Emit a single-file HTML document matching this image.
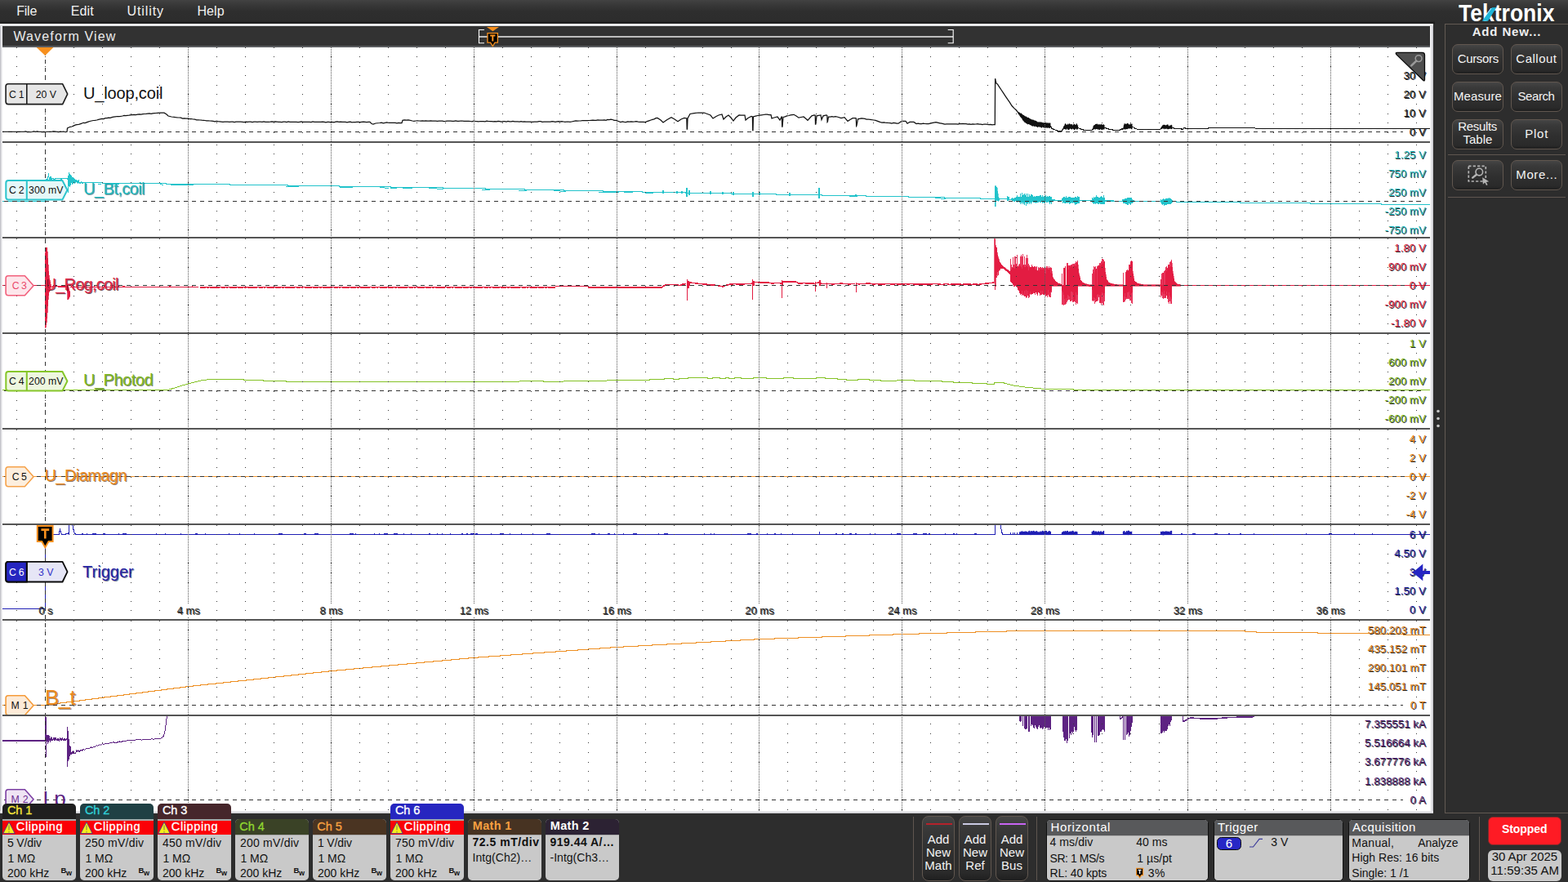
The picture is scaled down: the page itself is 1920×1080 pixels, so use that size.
<!DOCTYPE html><html lang="en"><head><meta charset="utf-8"><title>Tektronix Waveform View</title><style>
html,body{margin:0;padding:0}
body{width:1920px;height:1080px;overflow:hidden;position:relative;background:#2d2d2d;font-family:"Liberation Sans",sans-serif;}
.t{position:absolute;white-space:nowrap;line-height:normal;}
.abs{position:absolute}
#menubar{position:absolute;left:0;top:0;width:1920px;height:29px;background:linear-gradient(#424242 0,#383838 6px,#2e2e2e 14px,#2c2c2c 29px);}
#menubar:after{content:"";position:absolute;left:0;top:25px;width:1757px;height:4px;background:linear-gradient(#2c2c2c,#202020 70%,#151515)}
#wvframe{position:absolute;left:0;top:29px;width:1755px;height:967px;background:linear-gradient(90deg,#b8b8be 0,#e9e9ec 2px,#f4f4f6 3px,#f4f4f6 1752px,#e0e0e4 1753px,#c4c4ca 1755px);}
#wvframe:before{content:"";position:absolute;left:0;top:0;width:1755px;height:3px;background:linear-gradient(#ffffff,#dcdde0)}
#wvframe:after{content:"";position:absolute;left:0;bottom:0;width:1755px;height:3px;background:linear-gradient(#f2f2f4,#c9c9ce)}
#wvhead{position:absolute;left:3px;top:32px;width:1748px;height:26px;background:#323232;border-bottom:2px solid #5a5c5f;box-sizing:border-box}
#wv{position:absolute;left:3px;top:58px;}
.btn{position:absolute;box-sizing:border-box;border:1px solid #61574f;border-radius:7px;background:linear-gradient(#454545 0,#393939 18%,#2f2f2f 55%,#2a2a2a 88%,#1f1f1f 100%);}
.sepv{position:absolute;width:1px;background:#5f5650}
.seph{position:absolute;height:1px;background:#5f5650}
.badge{position:absolute;width:90px;border-radius:5px;overflow:hidden;background:#c9c9c9;}
.badge .hd{position:absolute;left:0;top:0;width:100%;height:19px;}
.badge .clip{position:absolute;left:0;width:100%;top:21px;height:17px;background:#fb0007}
.info{position:absolute;box-sizing:border-box;border:1.5px solid #101010;border-radius:5px;background:#c9c9c9;overflow:hidden}
.info .hd{position:absolute;left:0;top:0;width:100%;height:18.5px;background:#58595b;border-bottom:1px solid #b0b0b0}
</style></head><body>
<div id="menubar">
<span class="t" style="left:20.30px;top:5.00px;font-size:16px;color:#f2f2f2;letter-spacing:-0.267px;">File</span>
<span class="t" style="left:86.70px;top:5.00px;font-size:16px;color:#f2f2f2;letter-spacing:0.180px;">Edit</span>
<span class="t" style="left:155.50px;top:5.00px;font-size:16px;color:#f2f2f2;letter-spacing:0.897px;">Utility</span>
<span class="t" style="left:241.40px;top:5.00px;font-size:16px;color:#f2f2f2;letter-spacing:0.127px;">Help</span>
</div>
<span class="t" style="left:1785.90px;top:-1.30px;font-size:29.5px;color:#fff;transform:scaleX(0.8989);transform-origin:0 0;font-weight:700;">Tektronix</span>
<svg class="abs" style="left:1810px;top:4px" width="30" height="24" viewBox="1810 4 30 24"><polygon points="1814.8,25.8 1822,25.8 1832.4,9.2 1827,9.2" fill="#1fb5d8"/></svg>
<div id="wvframe"></div><div id="wvhead"></div>
<span class="t" style="left:16.40px;top:35.70px;font-size:16px;color:#ececec;letter-spacing:1.150px;">Waveform View</span>
<svg class="abs" style="left:580px;top:30px" width="600" height="30" viewBox="580 30 600 30">
<line x1="587" y1="45" x2="1167" y2="45" stroke="#bdbdbd" stroke-width="2"/>
<path d="M593 36.5H586.5V52.7H593" fill="none" stroke="#fff" stroke-width="1.1"/>
<path d="M1160.7 36.5H1167.2V52.7H1160.7" fill="none" stroke="#fff" stroke-width="1.1"/>
<polygon points="595.9,33 611,33 603.4,38.2" fill="#f7901e"/>
<path d="M597 40.6H609.4V52.2H606L603.3 56.6L600.6 52.2H597Z" fill="#000" stroke="#f7901e" stroke-width="1.3"/>
<path d="M600.2 43.6H606.4M603.3 43.6V50.6" stroke="#f7901e" stroke-width="2" fill="none"/>
</svg>
<svg id="wv" width="1748" height="935" viewBox="3 58 1748 935" shape-rendering="crispEdges">
<rect x="3" y="58" width="1748" height="935" fill="#fff"/>
<defs><clipPath id="cs0"><rect x="3" y="58" width="1748" height="115"/></clipPath><clipPath id="cs1"><rect x="3" y="175" width="1748" height="115"/></clipPath><clipPath id="cs2"><rect x="3" y="292" width="1748" height="115"/></clipPath><clipPath id="cs3"><rect x="3" y="409" width="1748" height="115"/></clipPath><clipPath id="cs4"><rect x="3" y="526" width="1748" height="115"/></clipPath><clipPath id="cs5"><rect x="3" y="643" width="1748" height="115"/></clipPath><clipPath id="cs6"><rect x="3" y="760" width="1748" height="115"/></clipPath><clipPath id="cs7"><rect x="3" y="877" width="1748" height="116"/></clipPath></defs>
<g clip-path="url(#cs0)"><polyline points="3.0,161.3 5.0,161.3 7.1,161.3 9.1,161.3 11.1,161.3 13.1,161.3 15.2,161.3 17.2,161.3 19.2,161.3 21.2,161.3 23.3,161.3 25.3,161.3 27.3,161.3 29.3,161.3 31.4,161.0 33.4,161.7 35.4,161.3 37.4,161.6 39.5,161.4 41.5,160.9 43.5,161.3 45.5,161.0 47.6,161.3 49.6,161.3 51.6,161.7 53.6,161.5 55.7,161.7 57.7,161.3 59.7,161.3 61.7,161.3 63.8,161.2 65.8,161.0 67.8,161.1 69.8,161.3 71.9,161.5 73.9,161.1 75.9,161.3 77.9,161.1 80.0,161.5 82.0,161.3 82.5,157.0 86.0,155.3 88.0,155.0 90.0,154.1 92.0,153.2 94.0,152.7 96.0,152.5 98.0,151.8 100.0,151.2 102.0,150.3 104.0,150.5 106.0,149.8 108.0,149.1 110.0,148.5 112.0,148.0 114.2,147.5 116.3,147.4 118.5,147.0 120.7,146.3 122.8,145.9 125.0,145.5 127.0,145.6 129.0,144.7 131.0,144.6 133.0,144.2 135.0,144.3 137.0,143.6 139.2,143.2 141.3,142.8 143.5,142.5 145.7,142.5 147.8,142.3 150.0,142.0 152.0,141.4 154.0,141.6 156.0,141.3 158.0,141.2 160.0,140.9 162.0,140.7 164.2,140.5 166.3,140.7 168.5,140.2 170.7,140.0 172.8,140.1 175.0,139.7 177.0,139.5 179.0,139.4 181.0,139.2 183.0,139.0 185.0,139.3 187.0,138.8 189.0,138.6 191.0,138.5 193.0,138.3 195.0,138.2 197.0,138.2 199.0,138.2 201.0,138.2 204.0,140.0 206.0,142.0 210.0,143.0 215.0,143.7 217.1,143.9 219.2,144.0 221.4,144.1 223.5,145.0 225.6,144.8 227.8,145.1 229.9,145.1 232.0,145.5 234.2,145.5 236.3,146.0 238.5,146.2 240.7,146.8 242.8,146.8 245.0,147.0 247.0,147.2 249.0,147.3 251.0,147.5 253.0,147.9 255.0,147.8 257.0,148.0 259.0,148.1 261.0,148.3 263.0,148.8 265.0,148.5 267.0,148.7 269.0,148.8 271.0,149.1 273.0,149.4 275.0,149.2 277.0,149.2 279.0,149.2 281.0,149.3 283.0,149.2 285.0,149.2 287.0,149.5 289.0,149.2 291.0,149.2 293.0,149.2 295.0,149.2 297.0,149.3 299.0,149.5 301.0,149.2 303.0,149.4 305.0,149.2 307.0,149.2 309.0,149.5 311.0,149.2 313.0,149.2 315.0,149.4 317.0,149.2 319.0,149.2 321.0,149.3 323.0,148.9 325.0,149.4 327.0,149.4 329.0,149.3 331.0,149.2 333.0,148.9 335.0,149.1 337.0,149.0 339.0,149.2 341.0,149.4 343.0,149.3 345.0,149.6 347.0,149.2 349.0,149.2 351.0,149.6 353.0,148.9 355.0,149.3 357.0,149.3 359.0,149.4 361.0,149.3 363.0,149.3 365.0,149.6 367.0,149.3 369.0,149.0 371.0,149.3 373.0,149.3 375.0,149.3 377.0,149.3 379.0,149.3 381.0,149.7 383.0,149.0 385.0,149.3 387.0,149.3 389.0,149.4 391.0,149.3 393.0,149.3 395.0,149.1 397.0,149.3 399.0,149.8 401.0,149.3 403.0,149.3 405.0,149.8 407.0,149.3 409.0,149.8 411.0,149.2 413.0,149.0 415.0,149.4 417.0,149.2 419.0,149.4 421.0,149.4 423.0,149.4 425.0,149.8 427.0,149.4 429.0,149.2 431.0,149.8 433.0,149.5 435.0,149.5 437.0,149.4 439.0,149.4 441.0,149.6 443.0,149.4 445.0,149.2 447.0,149.4 449.0,149.6 451.0,149.4 453.0,149.4 455.0,151.5 457.0,152.0 460.0,151.0 465.0,150.5 467.1,150.2 469.3,150.8 471.4,150.4 473.6,149.9 475.7,150.4 477.9,150.4 480.0,150.3 482.0,150.3 484.0,150.4 486.0,150.8 488.0,150.3 490.0,150.5 492.0,150.5 493.0,147.3 495.3,147.0 497.7,147.1 500.0,147.0 505.0,148.0 507.0,148.3 509.1,148.0 511.1,147.8 513.1,148.0 515.2,148.1 517.2,148.0 519.3,148.1 521.3,147.8 523.3,148.1 525.4,148.1 527.4,147.9 529.4,148.1 531.5,148.1 533.5,148.2 535.6,148.4 537.6,148.2 539.6,148.2 541.7,148.2 543.7,148.5 545.7,148.4 547.8,148.2 549.8,148.2 551.9,148.1 553.9,148.3 555.9,148.4 558.0,148.0 560.0,148.3 562.0,148.3 564.0,148.0 566.0,148.0 568.0,148.4 570.0,148.4 572.0,148.4 574.0,148.3 576.0,148.5 578.0,148.8 580.0,148.1 582.0,148.5 584.0,148.6 586.0,148.9 588.0,148.5 590.0,148.5 592.0,148.6 594.0,148.8 596.0,148.2 598.0,148.5 600.0,148.6 602.0,148.6 604.0,148.8 606.0,148.6 608.0,148.8 610.0,148.3 612.0,148.7 614.0,149.1 616.0,148.6 618.0,148.7 620.0,149.0 622.0,148.5 624.0,148.8 626.0,148.8 628.0,148.5 630.0,148.8 632.0,148.9 634.0,148.9 636.0,149.0 638.0,148.7 640.0,149.0 642.0,148.8 644.0,149.2 646.0,149.0 648.0,149.0 650.0,149.0 652.0,149.3 654.0,149.1 656.0,149.0 658.0,149.0 660.0,148.6 662.0,148.7 664.0,149.4 666.0,149.2 668.0,149.0 670.0,149.0 672.0,149.0 674.0,149.0 676.0,148.7 678.0,148.9 680.0,149.3 682.0,148.8 684.0,148.7 686.0,148.8 688.0,148.6 690.0,149.0 692.0,149.4 694.0,149.0 696.0,149.0 698.0,149.4 700.0,149.0 705.0,148.0 707.1,148.1 709.3,148.0 711.4,147.8 713.6,147.5 715.7,147.5 717.9,147.6 720.0,147.6 722.0,147.5 724.0,147.3 726.0,147.2 728.0,147.4 730.0,147.3 732.0,147.0 734.0,147.2 736.0,147.1 738.0,147.1 740.0,147.0 742.0,147.3 744.0,146.4 746.0,146.7 748.0,146.2 750.0,146.5 752.0,147.4 754.0,147.4 756.0,148.0 760.0,149.5 762.1,149.0 764.3,149.4 766.4,149.7 768.6,149.0 770.7,149.1 772.9,148.9 775.0,149.0 777.1,148.9 779.3,148.7 781.4,149.2 783.6,149.3 785.7,149.4 787.9,149.3 790.0,149.5 792.3,148.7 794.7,147.8 797.0,147.0 799.0,146.4 801.0,145.8 803.0,144.7 805.0,144.5 809.0,147.0 812.0,150.0 817.0,146.5 822.0,143.7 826.0,146.0 830.0,148.7 834.0,146.0 838.0,144.5 840.8,145.0 841.2,158.0 841.5,158.0 842.0,145.0 845.0,139.5 850.0,138.6 855.0,138.0 857.3,138.0 859.7,138.0 862.0,138.0 866.0,139.5 870.0,141.0 873.0,145.0 877.0,142.5 880.0,141.0 884.0,140.0 886.0,146.0 889.0,143.0 892.0,141.0 895.0,144.0 898.0,148.0 901.0,144.0 905.0,141.0 907.3,141.1 909.7,141.0 912.0,141.0 913.0,147.0 916.0,144.5 920.0,142.5 921.4,143.0 921.7,159.5 922.0,159.5 922.4,143.0 925.2,142.2 928.0,141.5 930.3,141.1 932.7,140.8 935.0,140.5 937.2,140.2 939.5,140.1 941.8,140.5 944.0,140.5 945.0,145.0 948.0,144.0 952.0,143.0 955.0,147.0 957.3,142.5 957.7,155.0 958.0,155.0 959.0,143.4 961.3,142.8 963.7,141.8 966.0,141.5 968.0,140.9 970.0,140.6 972.0,140.3 975.0,142.0 978.0,144.2 981.0,143.5 984.0,143.0 987.0,145.5 989.0,147.3 992.0,144.0 994.0,141.9 997.0,141.0 998.2,141.3 998.5,152.0 998.8,152.0 1000.0,141.9 1005.0,141.0 1006.0,146.5 1008.0,141.9 1012.0,141.0 1012.8,141.5 1013.1,149.4 1013.4,149.0 1014.5,143.0 1016.6,143.0 1018.7,142.6 1020.8,143.0 1022.9,142.7 1025.0,143.0 1030.0,144.7 1034.0,143.7 1038.0,148.4 1041.0,146.5 1044.0,144.7 1047.5,144.7 1048.3,145.0 1048.6,154.4 1048.9,154.0 1050.5,145.8 1055.0,145.0 1057.0,145.1 1059.0,145.4 1061.0,146.0 1063.0,146.0 1065.2,146.3 1067.5,146.7 1069.8,147.0 1072.0,147.3 1074.0,148.1 1076.0,148.9 1078.0,149.7 1080.0,150.1 1082.0,150.0 1084.0,150.2 1086.0,150.3 1088.0,150.5 1090.0,150.6 1092.0,151.0 1094.0,150.5 1096.0,150.7 1098.0,151.2 1100.0,151.2 1104.0,148.4 1109.0,148.4 1111.0,151.2 1114.0,149.4 1119.0,149.4 1122.0,151.6 1124.1,151.2 1126.3,151.6 1128.4,151.6 1130.6,151.2 1132.7,151.5 1134.9,151.6 1137.0,151.6 1141.0,150.6 1146.0,149.7 1151.0,150.8 1153.0,151.2 1155.0,151.6 1157.0,152.0 1159.0,151.9 1161.0,151.8 1163.0,151.9 1165.0,151.8 1167.0,151.8 1169.0,151.8 1171.0,151.9 1173.0,152.0 1175.0,151.6 1177.0,151.6 1179.0,151.5 1181.0,151.7 1183.0,151.7 1185.0,152.0 1187.0,151.8 1189.0,152.3 1191.0,151.9 1193.0,152.2 1195.0,152.0 1197.0,151.6 1199.0,152.1 1201.0,152.2 1203.0,152.5 1205.0,152.0 1207.0,152.0 1209.0,152.3 1211.0,152.6 1213.0,152.3 1215.0,152.9 1217.0,152.5 1218.3,152.5 1218.6,96.2 1219.2,99.0 1220.0,102.2 1221.4,103.0 1223.4,106.1 1226.0,110.0 1228.6,113.9 1231.2,117.8 1233.8,121.7 1236.4,125.3 1239.0,129.5 1241.6,132.4 1244.3,134.8 1246.9,138.1" fill="none" stroke="#111" stroke-width="1.25" shape-rendering="geometricPrecision"/><path d="M1246.9 137.3 L1247.6 137.6 L1248.3 137.8 L1249.0 138.9 L1249.7 139.2 L1250.4 138.9 L1251.1 139.5 L1251.8 140.2 L1252.5 140.7 L1253.2 141.3 L1253.9 141.6 L1254.6 142.0 L1255.3 142.8 L1256.0 142.6 L1256.7 143.1 L1257.4 143.5 L1258.1 144.1 L1258.8 144.5 L1259.5 144.4 L1260.2 145.5 L1260.9 145.0 L1261.6 145.7 L1262.3 146.2 L1263.0 146.6 L1263.7 146.7 L1264.4 146.8 L1265.1 146.9 L1265.8 147.4 L1266.5 147.5 L1267.2 147.7 L1267.9 148.2 L1268.6 148.3 L1269.3 149.1 L1270.0 148.8 L1270.7 149.8 L1271.4 149.6 L1272.1 149.8 L1272.8 149.3 L1273.5 149.7 L1274.2 149.7 L1274.9 149.6 L1275.6 150.1 L1276.3 150.4 L1277.0 150.2 L1277.7 150.7 L1278.4 150.4 L1279.1 151.0 L1279.8 150.8 L1280.5 150.2 L1281.2 150.7 L1281.9 150.6 L1282.6 150.7 L1283.3 150.4 L1284.0 150.9 L1284.7 151.2 L1285.4 150.5 L1286.1 150.9 L1286.1 156.1 L1285.4 156.6 L1284.7 156.3 L1284.0 156.7 L1283.3 156.4 L1282.6 156.5 L1281.9 156.4 L1281.2 156.3 L1280.5 156.1 L1279.8 156.7 L1279.1 156.5 L1278.4 155.8 L1277.7 156.0 L1277.0 155.5 L1276.3 155.4 L1275.6 156.3 L1274.9 156.2 L1274.2 155.4 L1273.5 155.1 L1272.8 155.0 L1272.1 155.6 L1271.4 154.9 L1270.7 155.5 L1270.0 155.5 L1269.3 154.4 L1268.6 154.8 L1267.9 154.3 L1267.2 154.5 L1266.5 154.7 L1265.8 153.7 L1265.1 154.4 L1264.4 154.2 L1263.7 154.0 L1263.0 153.5 L1262.3 153.1 L1261.6 152.7 L1260.9 152.5 L1260.2 152.0 L1259.5 151.5 L1258.8 152.0 L1258.1 151.6 L1257.4 151.4 L1256.7 151.0 L1256.0 150.3 L1255.3 149.5 L1254.6 149.7 L1253.9 148.2 L1253.2 147.9 L1252.5 147.1 L1251.8 145.4 L1251.1 144.8 L1250.4 143.9 L1249.7 142.7 L1249.0 142.3 L1248.3 140.6 L1247.6 140.2 L1246.9 139.2Z" fill="#111" stroke="#111" stroke-width="0.8" stroke-linejoin="round" /><polyline points="1286.5,154.0 1287.5,157.2 1290.0,158.3 1293.8,159.7 1296.9,161.1 1300.0,160.3 1300.8,160.0" fill="none" stroke="#111" stroke-width="1.2" /><path d="M1300.8 159.4 L1301.5 158.9 L1302.2 156.5 L1302.9 154.3 L1303.6 153.8 L1304.3 151.6 L1305.0 151.6 L1305.7 152.9 L1306.4 153.6 L1307.1 152.8 L1307.8 151.7 L1308.5 152.6 L1309.2 151.8 L1309.9 151.5 L1310.6 152.4 L1311.3 152.5 L1312.0 152.5 L1312.7 152.4 L1313.4 153.6 L1314.1 153.2 L1314.8 152.1 L1315.5 152.0 L1316.2 153.1 L1316.9 153.3 L1317.6 153.5 L1318.3 151.4 L1319.0 153.4 L1319.7 153.6 L1319.7 158.1 L1319.0 158.0 L1318.3 158.4 L1317.6 157.4 L1316.9 158.1 L1316.2 158.1 L1315.5 158.6 L1314.8 158.4 L1314.1 157.6 L1313.4 157.2 L1312.7 158.3 L1312.0 157.7 L1311.3 157.7 L1310.6 157.4 L1309.9 158.0 L1309.2 158.3 L1308.5 158.6 L1307.8 158.7 L1307.1 157.8 L1306.4 157.3 L1305.7 158.6 L1305.0 157.5 L1304.3 158.2 L1303.6 157.5 L1302.9 157.9 L1302.2 157.8 L1301.5 158.0 L1300.8 157.9Z" fill="#111" stroke="#111" stroke-width="0.8" stroke-linejoin="round" /><polyline points="1320.3,156.5 1322.0,157.5 1325.0,158.4 1328.0,159.5 1337.5,159.6" fill="none" stroke="#111" stroke-width="1.2" /><path d="M1337.5 159.6 L1338.2 158.2 L1338.9 154.8 L1339.6 153.5 L1340.3 153.4 L1341.0 153.1 L1341.7 152.2 L1342.4 152.3 L1343.1 152.0 L1343.8 152.1 L1344.5 152.6 L1345.2 153.8 L1345.9 152.0 L1346.6 153.0 L1347.3 154.1 L1348.0 152.1 L1348.7 152.2 L1349.4 153.3 L1350.1 153.4 L1350.8 152.3 L1351.5 152.8 L1352.2 153.2 L1352.2 158.2 L1351.5 158.3 L1350.8 157.7 L1350.1 158.8 L1349.4 158.7 L1348.7 158.4 L1348.0 158.3 L1347.3 157.5 L1346.6 158.8 L1345.9 157.5 L1345.2 158.9 L1344.5 158.3 L1343.8 157.9 L1343.1 157.7 L1342.4 157.5 L1341.7 158.2 L1341.0 157.9 L1340.3 158.0 L1339.6 157.7 L1338.9 158.3 L1338.2 158.7 L1337.5 157.9Z" fill="#111" stroke="#111" stroke-width="0.8" stroke-linejoin="round" /><polyline points="1352.3,156.0 1356.2,157.7 1360.0,158.6 1364.0,159.2 1371.9,159.5 1372.0,158.2 1375.0,158.0" fill="none" stroke="#111" stroke-width="1.2" /><path d="M1375.0 158.6 L1375.7 157.0 L1376.4 153.4 L1377.1 151.3 L1377.8 152.6 L1378.5 152.2 L1379.2 151.6 L1379.9 152.8 L1380.6 151.0 L1381.3 151.3 L1382.0 152.8 L1382.7 152.8 L1383.4 153.1 L1384.1 151.6 L1384.8 152.1 L1385.5 152.2 L1386.2 151.8 L1386.2 157.7 L1385.5 157.7 L1384.8 157.2 L1384.1 157.0 L1383.4 157.1 L1382.7 157.2 L1382.0 157.1 L1381.3 157.0 L1380.6 157.9 L1379.9 157.4 L1379.2 157.7 L1378.5 158.0 L1377.8 158.1 L1377.1 158.0 L1376.4 158.0 L1375.7 157.0 L1375.0 157.3Z" fill="#111" stroke="#111" stroke-width="0.8" stroke-linejoin="round" /><polyline points="1386.7,155.0 1389.0,156.8 1392.2,158.1 1421.1,158.1" fill="none" stroke="#111" stroke-width="1.2" /><path d="M1421.1 158.1 L1421.8 157.7 L1422.5 155.3 L1423.2 154.7 L1423.9 153.2 L1424.6 153.4 L1425.3 152.8 L1426.0 154.5 L1426.7 153.1 L1427.4 153.9 L1428.1 153.7 L1428.8 152.9 L1429.5 152.8 L1430.2 152.7 L1430.9 154.7 L1431.6 154.7 L1432.3 153.8 L1433.0 154.0 L1433.7 153.8 L1434.4 152.9 L1435.1 154.4 L1435.1 157.4 L1434.4 158.1 L1433.7 157.2 L1433.0 158.0 L1432.3 156.9 L1431.6 157.5 L1430.9 157.6 L1430.2 157.9 L1429.5 157.7 L1428.8 157.2 L1428.1 157.2 L1427.4 158.0 L1426.7 157.0 L1426.0 157.7 L1425.3 157.9 L1424.6 157.0 L1423.9 157.2 L1423.2 157.2 L1422.5 157.8 L1421.8 156.8 L1421.1 157.1Z" fill="#111" stroke="#111" stroke-width="0.8" stroke-linejoin="round" /><polyline points="1435.2,156.6 1438.0,157.2 1446.9,157.2 1447.0,158.1 1449.0,158.1 1450.0,156.4 1451.5,156.4 1452.0,157.2 1479.7,157.2 1480.0,156.4 1536.7,156.4 1537.5,157.6 1539.0,157.3 1751.0,157.3" fill="none" stroke="#111" stroke-width="1.2" /></g>
<g clip-path="url(#cs1)"><polyline points="3.0,246.3 55.0,246.3 55.5,246.0 56.0,225.0 57.0,219.0 58.0,222.0 59.0,216.0 59.5,212.0 60.0,217.0 61.0,220.0 62.0,216.5 63.0,219.5 64.0,218.5 66.0,219.2 70.0,218.6 75.0,219.0 80.0,218.8 83.0,219.0" fill="none" stroke="#22c3cb" stroke-width="1.1" /><polyline points="83.0,214.2 83.8,236.2 84.5,210.9 85.2,229.0 86.0,213.4 86.8,227.3 87.5,215.4 88.2,226.0 89.0,217.0 89.8,225.2 90.5,218.4 91.2,224.7 92.0,219.5 92.8,224.4 93.5,220.5 94.2,224.3 95.0,221.4 95.8,224.3 96.5,222.1 97.2,224.4 98.0,222.8 98.8,224.5 99.5,223.1 100.2,224.3 101.0,223.3 101.8,224.2 102.5,223.4" fill="none" stroke="#22c3cb" stroke-width="1.0" /><path d="M103.0 223.5H125.0V224.5H203.0V225.5H281.0V226.5H352.0V227.5H415.0V228.5H478.0V229.5H542.0V230.5H594.0V231.5H642.0V232.5H690.0V233.5H738.0V234.5H786.0V235.5H839.0V236.5H895.0V237.5H950.0V238.5H1006.0V239.5H1060.0V240.5H1112.0V241.5H1156.0V242.5H1200.0V243.5H1218.0" fill="none" stroke="#22c3cb" stroke-width="1"/><line x1="120" y1="225.0" x2="124" y2="225.2" stroke="#22c3cb" stroke-width="1"/><line x1="130" y1="225.2" x2="146" y2="225.4" stroke="#22c3cb" stroke-width="1"/><line x1="196" y1="225.9" x2="200" y2="226.1" stroke="#22c3cb" stroke-width="1"/><line x1="209" y1="226.3" x2="237" y2="226.5" stroke="#22c3cb" stroke-width="1"/><line x1="350" y1="228.1" x2="366" y2="228.3" stroke="#22c3cb" stroke-width="1"/><line x1="416" y1="229.1" x2="432" y2="229.3" stroke="#22c3cb" stroke-width="1"/><line x1="465" y1="229.9" x2="476" y2="230.1" stroke="#22c3cb" stroke-width="1"/><line x1="478" y1="230.1" x2="486" y2="230.3" stroke="#22c3cb" stroke-width="1"/><line x1="493" y1="230.3" x2="505" y2="230.5" stroke="#22c3cb" stroke-width="1"/><line x1="525" y1="230.9" x2="543" y2="231.1" stroke="#22c3cb" stroke-width="1"/><line x1="589" y1="232.0" x2="600" y2="232.2" stroke="#22c3cb" stroke-width="1"/><line x1="634" y1="233.0" x2="645" y2="233.2" stroke="#22c3cb" stroke-width="1"/><line x1="678" y1="233.9" x2="693" y2="234.1" stroke="#22c3cb" stroke-width="1"/><line x1="733" y1="235.2" x2="758" y2="235.4" stroke="#22c3cb" stroke-width="1"/><line x1="764" y1="235.7" x2="775" y2="235.9" stroke="#22c3cb" stroke-width="1"/><line x1="790" y1="236.2" x2="800" y2="236.4" stroke="#22c3cb" stroke-width="1"/><line x1="1040" y1="240.7" x2="1050" y2="240.9" stroke="#22c3cb" stroke-width="1"/><line x1="1145" y1="242.9" x2="1158" y2="243.1" stroke="#22c3cb" stroke-width="1"/><line x1="841" y1="230" x2="841" y2="240.5" stroke="#22c3cb" stroke-width="1.2"/><line x1="844" y1="233" x2="844" y2="239" stroke="#22c3cb" stroke-width="1.2"/><line x1="922" y1="234.5" x2="922" y2="240.5" stroke="#22c3cb" stroke-width="1.2"/><line x1="1003" y1="230" x2="1003" y2="242.5" stroke="#22c3cb" stroke-width="1.2"/><line x1="812" y1="233.3" x2="812" y2="237.0" stroke="#22c3cb" stroke-width="1.2"/><line x1="829" y1="233.6" x2="829" y2="237.3" stroke="#22c3cb" stroke-width="1.2"/><line x1="835" y1="233.7" x2="835" y2="237.4" stroke="#22c3cb" stroke-width="1.2"/><line x1="870" y1="234.4" x2="870" y2="238.1" stroke="#22c3cb" stroke-width="1.2"/><line x1="885" y1="234.6" x2="885" y2="238.3" stroke="#22c3cb" stroke-width="1.2"/><line x1="898" y1="234.9" x2="898" y2="238.6" stroke="#22c3cb" stroke-width="1.2"/><line x1="930" y1="235.4" x2="930" y2="239.1" stroke="#22c3cb" stroke-width="1.2"/><line x1="967" y1="236.1" x2="967" y2="239.8" stroke="#22c3cb" stroke-width="1.2"/><line x1="1048" y1="237.6" x2="1048" y2="241.3" stroke="#22c3cb" stroke-width="1.2"/><path d="M1218.2 243.4 L1218.4 228 L1219 227.2 L1220 228.5 L1221 230 L1221.8 236 L1222.5 241 L1223.5 243 L1223.5 245 L1221.5 246 L1220.5 245 L1219.6 246 L1219 252.5 L1218.5 252.5Z" fill="#22c3cb" stroke="#22c3cb" stroke-width="0.6"/><polyline points="1223.0,243.6 1233.0,243.8 1233.5,240.0 1234.0,245.5 1235.0,241.0 1235.5,244.5 1238.3,244.0" fill="none" stroke="#22c3cb" stroke-width="1.2" /><path d="M1238.5 243.1V244.7M1239.5 242.1V245.8M1240.5 242.7V245.5M1241.5 242.6V247.0M1242.5 241.5V246.9M1243.5 241.9V246.2M1244.5 240.9V246.3M1245.5 238.9V248.0M1246.5 241.4V246.6M1247.5 240.5V247.1M1248.5 240.9V247.8M1249.5 239.4V249.1M1250.5 240.7V248.0M1251.5 239.8V247.9M1252.5 239.1V247.8M1253.5 240.5V247.8M1254.5 239.3V249.8M1255.5 239.3V247.6M1256.5 239.9V248.3M1257.5 240.5V249.0M1258.5 240.8V247.9M1259.5 240.5V247.8M1260.5 240.0V247.5M1261.5 240.4V248.1M1262.5 239.8V248.7M1263.5 238.3V247.9M1264.5 239.2V247.3M1265.5 240.7V247.8M1266.5 240.0V248.1M1267.5 240.7V247.6M1268.5 240.2V249.3M1269.5 239.7V248.1M1270.5 240.1V247.8M1271.5 239.8V248.0M1272.5 240.3V247.2M1273.5 239.3V247.7M1274.5 239.3V247.8M1275.5 240.5V247.4M1276.5 238.7V248.8M1277.5 240.5V247.6M1278.5 240.2V248.5M1279.5 240.3V248.0M1280.5 239.3V247.2M1281.5 240.9V248.1M1282.5 240.0V248.1M1283.5 240.6V247.2M1284.5 240.0V248.3M1285.5 240.1V249.6M1286.5 241.0V247.9M1287.5 240.8V250.0" stroke="#22c3cb" stroke-width="1" fill="none"/><line x1="1249" y1="236.9" x2="1249" y2="249.9" stroke="#22c3cb" stroke-width="1"/><line x1="1251.2" y1="236.3" x2="1251.2" y2="250.0" stroke="#22c3cb" stroke-width="1"/><line x1="1253.4" y1="237.9" x2="1253.4" y2="250.0" stroke="#22c3cb" stroke-width="1"/><line x1="1254.8" y1="236.8" x2="1254.8" y2="250.9" stroke="#22c3cb" stroke-width="1"/><line x1="1256.6" y1="237.3" x2="1256.6" y2="251.5" stroke="#22c3cb" stroke-width="1"/><line x1="1258.4" y1="237.1" x2="1258.4" y2="250.4" stroke="#22c3cb" stroke-width="1"/><line x1="1260.2" y1="237.5" x2="1260.2" y2="250.0" stroke="#22c3cb" stroke-width="1"/><line x1="1262" y1="238.2" x2="1262" y2="250.3" stroke="#22c3cb" stroke-width="1"/><polyline points="1287.5,245.0 1300.0,245.4" fill="none" stroke="#22c3cb" stroke-width="1.3" /><path d="M1300.5 242.9V246.4M1301.5 242.3V249.0M1302.5 240.9V247.8M1303.5 241.2V248.9M1304.5 241.5V249.2M1305.5 240.2V248.9M1306.5 242.1V248.3M1307.5 242.1V248.8M1308.5 240.5V248.4M1309.5 241.0V249.9M1310.5 241.4V248.5M1311.5 241.6V248.5M1312.5 241.5V248.4M1313.5 241.9V248.5M1314.5 241.7V248.4M1315.5 241.6V248.8M1316.5 241.1V250.5M1317.5 241.0V250.0M1318.5 241.8V249.7M1319.5 240.3V249.2M1320.5 241.2V248.8M1321.5 241.4V249.1" stroke="#22c3cb" stroke-width="1" fill="none"/><polyline points="1321.0,245.6 1337.2,245.9" fill="none" stroke="#22c3cb" stroke-width="1.3" /><path d="M1337.5 242.2V247.7M1338.5 242.6V248.6M1339.5 241.1V250.3M1340.5 241.5V249.4M1341.5 241.2V250.2M1342.5 239.4V249.1M1343.5 240.9V249.2M1344.5 240.6V249.6M1345.5 241.6V249.9M1346.5 241.6V249.1M1347.5 240.6V250.1M1348.5 240.1V250.0M1349.5 240.7V249.7M1350.5 241.6V249.6M1351.5 239.2V250.2M1352.5 241.7V249.9" stroke="#22c3cb" stroke-width="1" fill="none"/><polyline points="1352.3,246.0 1374.2,246.3" fill="none" stroke="#22c3cb" stroke-width="1.3" /><path d="M1374.5 244.2V247.2M1375.5 243.9V249.4M1376.5 243.8V248.8M1377.5 243.1V249.1M1378.5 243.4V249.7M1379.5 242.5V249.6M1380.5 242.3V250.8M1381.5 242.0V251.0M1382.5 242.1V249.4M1383.5 242.4V250.4M1384.5 241.5V250.6M1385.5 241.8V249.2M1386.5 243.5V248.6M1387.5 244.7V247.9M1388.5 244.5V247.0" stroke="#22c3cb" stroke-width="1" fill="none"/><polyline points="1388.3,246.4 1421.1,246.8" fill="none" stroke="#22c3cb" stroke-width="1.3" /><path d="M1421.5 244.0V247.9M1422.5 245.2V249.9M1423.5 244.3V250.9M1424.5 243.0V249.6M1425.5 244.1V251.7M1426.5 243.7V250.5M1427.5 243.2V250.9M1428.5 243.3V250.5M1429.5 243.2V249.6M1430.5 243.3V250.4M1431.5 242.0V249.7M1432.5 242.8V249.7M1433.5 243.3V249.9M1434.5 244.1V249.1M1435.5 245.4V247.7M1436.5 246.1V247.0" stroke="#22c3cb" stroke-width="1" fill="none"/><path d="M1436.0 246.5H1440.0V247.5H1518.0V248.5H1604.0V249.5H1691.0V250.5H1751.0" fill="none" stroke="#22c3cb" stroke-width="1"/></g>
<g clip-path="url(#cs2)"><polyline points="3.0,349.4 55.0,349.4" fill="none" stroke="#e31c42" stroke-width="1.0" /><path d="M55.2 349 L55.3 330 L55.5 310 L56 303 L57.6 303 L58.3 312 L58.9 322 L59.5 332 L60.3 340 L61.6 345 L62.2 350 L61.4 355 L60 358 L59.2 364 L58.5 375 L57.7 388 L56.9 396 L55.9 401.3 L55.2 401 L55.3 380 L55.2 360Z" fill="#e31c42" stroke="#e31c42" stroke-width="0.7"/><polyline points="60.5,350.0 64.0,351.5 66.0,349.5 68.0,350.5 72.0,351.0 78.0,351.0 82.3,351.0" fill="none" stroke="#e31c42" stroke-width="1.2" /><path d="M82.3 350.5 L82.6 347 L83 351 L83.4 349.5 L84.2 352 L85 356 L86 358 L85.8 362 L84.6 365 L83.2 367.4 L82.6 367 L82.5 358Z" fill="#e31c42" stroke="#e31c42" stroke-width="0.7"/><polyline points="86.0,352.0 88.0,351.5 90.5,351.6 93.0,351.6 95.5,351.8 98.0,351.6 100.5,351.7 103.0,351.0 105.5,351.4 108.0,351.8 110.5,351.5 113.0,351.7 115.5,351.1 118.0,351.4 120.5,351.2 123.0,351.4 125.5,351.5 128.0,351.0 130.5,351.2 133.0,351.2 135.5,351.7 138.0,351.6 140.5,351.1 143.0,351.6 145.5,351.1 148.0,351.5 150.5,351.1 153.0,351.0 155.5,351.7 158.0,351.2 160.5,351.2 163.0,351.8 165.5,351.7 168.0,351.2 170.5,351.8 173.0,351.4 175.5,351.5 178.0,351.2 180.5,351.8 183.0,351.6 185.5,351.8 188.0,351.7 190.5,351.2 193.0,351.3 195.5,351.1 198.0,351.1 200.5,351.1 203.0,351.2 205.5,351.5 208.0,351.0 210.5,351.5 213.0,351.3 215.5,351.2 218.0,351.7 220.5,351.4 223.0,351.3 225.5,351.4 228.0,351.6 230.5,351.0 233.0,351.8 235.5,351.0 238.0,351.6 240.5,351.7 243.0,351.0" fill="none" stroke="#e31c42" stroke-width="1.2" /><line x1="245" y1="351.5" x2="680" y2="351.5" stroke="#e31c42" stroke-width="1"/><line x1="245" y1="352.5" x2="680" y2="352.5" stroke="#e31c42" stroke-width="1" stroke-dasharray="7 1 3 1 12 2 5 1 2 2 9 1"/><polyline points="680.0,350.6 720.0,350.5 721.0,352.0 810.0,352.0 813.0,350.0 815.0,348.8 825.0,348.5 833.0,349.5 836.0,348.0 840.5,347.5" fill="none" stroke="#e31c42" stroke-width="1.6" /><line x1="841.3" y1="342" x2="841.3" y2="367.5" stroke="#e31c42" stroke-width="1.6"/><line x1="843" y1="344" x2="843" y2="353" stroke="#e31c42" stroke-width="1.4"/><line x1="844.5" y1="345" x2="844.5" y2="350" stroke="#e31c42" stroke-width="1.2"/><polyline points="845.0,346.2 850.0,346.5 856.0,347.5 862.0,347.8 870.0,348.8 878.0,349.5 885.0,351.0 890.0,349.0 895.0,348.0 900.0,347.5 905.0,348.3 912.0,347.7 920.0,347.5 921.0,346.0" fill="none" stroke="#e31c42" stroke-width="1.6" /><line x1="921.7" y1="342" x2="921.7" y2="366.75" stroke="#e31c42" stroke-width="1.5"/><line x1="923" y1="343.5" x2="923" y2="350" stroke="#e31c42" stroke-width="1.3"/><polyline points="924.0,345.5 930.0,345.8 940.0,345.9 945.0,347.0 950.0,346.5 957.0,346.8" fill="none" stroke="#e31c42" stroke-width="1.6" /><line x1="957.6" y1="343" x2="957.6" y2="365" stroke="#e31c42" stroke-width="1.5"/><line x1="958.8" y1="343.5" x2="958.8" y2="349" stroke="#e31c42" stroke-width="1.2"/><polyline points="959.5,345.0 975.0,345.2 978.0,347.0 985.0,346.6 990.0,347.2 997.5,346.8" fill="none" stroke="#e31c42" stroke-width="1.6" /><line x1="998.2" y1="345" x2="998.2" y2="357" stroke="#e31c42" stroke-width="1.4"/><line x1="1004.2" y1="343" x2="1004.2" y2="349.5" stroke="#e31c42" stroke-width="1.6"/><line x1="1012.3" y1="346" x2="1012.3" y2="353" stroke="#e31c42" stroke-width="1.4"/><polyline points="999.0,346.5 1003.0,346.0 1006.0,347.5 1012.0,347.5 1020.0,347.8 1030.0,347.2 1040.0,347.8 1047.5,347.5" fill="none" stroke="#e31c42" stroke-width="1.6" /><line x1="1048.3" y1="346" x2="1048.3" y2="358" stroke="#e31c42" stroke-width="1.4"/><polyline points="1049.0,347.5 1052.0,347.9 1055.0,347.5 1058.0,347.7 1061.0,347.2 1064.0,347.2 1067.0,347.4 1070.0,348.1 1073.0,347.4 1076.0,347.9 1079.0,348.1 1082.0,348.1 1085.0,347.6 1088.0,347.6 1091.0,347.8 1094.0,348.0 1097.0,347.4 1100.0,348.0 1103.0,348.1 1106.0,348.1 1109.0,347.4 1112.0,348.2 1115.0,347.5 1118.0,347.7 1121.0,348.0 1124.0,348.3 1127.0,347.8 1130.0,348.3 1133.0,348.0 1136.0,347.8 1139.0,347.8 1142.0,347.7 1145.0,347.6 1148.0,347.7 1151.0,348.2 1154.0,348.5 1157.0,347.7 1160.0,347.6 1163.0,348.5 1166.0,348.1 1169.0,348.0 1172.0,347.9 1175.0,348.2 1178.0,348.4 1181.0,348.1 1184.0,348.1 1187.0,347.7 1190.0,348.5 1193.0,347.8 1196.0,348.2 1199.0,348.5 1200.0,348.0 1208.0,347.0 1216.0,346.2 1217.3,346.2" fill="none" stroke="#e31c42" stroke-width="1.6" /><path d="M1217.6 346 L1217.8 300 L1218 292.2 L1218.6 293 L1219 300 L1220 303.4 L1220.6 303 L1221 309 L1222 314 L1223.5 318.5 L1225 322.3 L1227 324.8 L1229 326.6 L1233 330 L1236.8 332.4 L1236.8 335.9 L1233 332.4 L1229 329 L1226.5 328.6 L1225 328.9 L1224 331 L1223.2 330 L1222.6 337 L1222 331 L1221.3 334 L1220.8 340 L1220.3 335 L1219.6 338 L1219.2 348 L1218.8 354.7 L1218.3 354.7 L1218.1 347Z" fill="#e31c42" stroke="#e31c42" stroke-width="0.7"/><path d="M1237.5 317.4V344.3M1238.5 324.3V345.1M1239.5 327.2V345.3M1240.5 315.1V349.0M1241.5 324.1V350.7M1242.5 313.6V350.8M1243.5 314.2V350.4M1244.5 323.0V347.0M1245.5 311.9V349.8M1246.5 326.0V354.8M1247.5 323.7V353.8M1248.5 323.1V359.1M1249.5 314.2V361.3M1250.5 311.7V356.2M1251.5 314.0V362.3M1252.5 311.4V360.7M1253.5 323.9V360.5M1254.5 313.8V363.3M1255.5 324.0V360.0M1256.5 316.0V365.0M1257.5 312.2V364.2M1258.5 315.5V361.8M1259.5 323.3V364.8M1260.5 325.0V363.5M1261.5 327.1V359.6M1262.5 326.8V361.2M1263.5 324.2V359.7M1264.5 325.6V359.1M1265.5 327.2V359.3M1266.5 326.4V359.3M1267.5 325.5V361.2M1268.5 327.1V358.4M1269.5 326.4V358.6M1270.5 330.9V361.8M1271.5 327.0V358.3M1272.5 327.9V358.8M1273.5 326.8V362.3M1274.5 326.8V360.6M1275.5 327.7V355.7M1276.5 327.0V360.4M1277.5 327.9V361.2M1278.5 327.7V360.4M1279.5 328.1V360.5M1280.5 328.1V363.1M1281.5 326.3V362.0M1282.5 326.2V364.3M1283.5 328.3V361.2M1284.5 325.8V362.6M1285.5 328.5V363.6M1286.5 326.7V363.7M1287.5 327.8V358.3" stroke="#e8365c" stroke-width="1" fill="none"/><path d="M1237.5 331.1V345.2M1238.5 330.0V346.1M1239.5 327.7V347.1M1240.5 328.3V348.0M1241.5 328.1V348.8M1242.5 329.3V349.3M1243.5 324.7V349.8M1244.5 327.4V350.3M1245.5 325.8V351.7M1246.5 326.9V353.8M1247.5 325.5V355.9M1248.5 325.9V357.9M1249.5 325.4V359.4M1250.5 326.6V360.1M1251.5 328.8V355.5M1252.5 324.6V358.7M1253.5 324.9V362.1M1254.5 327.4V355.7M1255.5 326.8V363.1M1256.5 326.4V355.2M1257.5 324.8V363.8M1258.5 326.7V355.9M1259.5 331.0V362.9M1260.5 327.0V362.2M1261.5 327.3V357.4M1262.5 327.3V360.8M1263.5 326.2V360.3M1264.5 327.2V359.8M1265.5 326.5V357.1M1266.5 327.2V359.1M1267.5 330.2V358.5M1268.5 329.9V358.4M1269.5 331.0V359.6M1270.5 331.6V359.8M1271.5 329.5V357.7M1272.5 331.8V357.8M1273.5 329.9V360.3M1274.5 329.4V355.9M1275.5 330.0V360.7M1276.5 329.9V356.3M1277.5 329.3V361.0M1278.5 330.3V361.2M1279.5 335.1V357.8M1280.5 334.5V359.5M1281.5 328.3V362.1M1282.5 329.0V362.4M1283.5 330.1V355.1M1284.5 330.3V363.1M1285.5 327.8V358.0M1286.5 333.6V356.8M1287.5 329.6V355.6" stroke="#e31c42" stroke-width="1" fill="none"/><path d="M1287.5 328 L1289 339.2 L1292 344.1 L1296 347 L1300.2 348.4 L1300.2 350 L1288 350 L1287.5 346Z" fill="#e31c42" stroke="#e31c42" stroke-width="0.6"/><path d="M1300.5 334.8V373.1M1301.5 349.0V373.2M1302.5 328.3V373.6M1303.5 349.0V373.3M1304.5 349.0V372.8M1305.5 349.0V372.4M1306.5 322.2V369.8M1307.5 322.1V368.4M1308.5 324.7V366.5M1309.5 326.2V366.9M1310.5 324.9V368.9M1311.5 324.0V368.5M1312.5 323.6V368.2M1313.5 323.4V370.2M1314.5 323.2V369.7M1315.5 323.0V366.8M1316.5 322.2V369.8M1317.5 320.1V372.8M1318.5 320.6V371.4M1319.5 319.3V372.1" stroke="#e8365c" stroke-width="1" fill="none"/><path d="M1300.5 349.0V356.1M1301.5 349.0V357.5M1302.5 349.0V361.4M1303.5 327.5V365.8M1304.5 325.6V371.3M1305.5 349.0V364.7M1306.5 325.6V367.6M1307.5 324.9V361.4M1308.5 329.6V362.0M1309.5 325.0V362.8M1310.5 326.7V368.5M1311.5 325.1V357.2M1312.5 325.6V357.1M1313.5 326.5V358.0M1314.5 326.0V368.5M1315.5 324.5V368.8M1316.5 324.7V367.3M1317.5 326.1V357.5M1318.5 322.1V361.4M1319.5 321.4V360.6" stroke="#e31c42" stroke-width="1" fill="none"/><path d="M1319.6 320 L1321 333.6 L1323 342.7 L1326 346.25 L1332 348.4 L1337.2 349 L1337.2 350.6 L1320 350.2Z" fill="#e31c42" stroke="#e31c42" stroke-width="0.6"/><path d="M1337.5 334.5V368.3M1338.5 329.8V366.4M1339.5 326.4V368.2M1340.5 327.4V371.9M1341.5 326.0V370.0M1342.5 349.0V369.0M1343.5 326.2V368.8M1344.5 325.3V367.6M1345.5 325.6V363.8M1346.5 321.8V370.5M1347.5 321.7V370.7M1348.5 320.2V372.9M1349.5 317.4V371.1M1350.5 317.1V373.1M1351.5 317.8V373.8M1352.5 320.4V369.1" stroke="#e8365c" stroke-width="1" fill="none"/><path d="M1337.5 349.0V355.1M1338.5 349.0V368.7M1339.5 332.7V363.8M1340.5 349.0V364.6M1341.5 329.8V365.7M1342.5 328.8V369.0M1343.5 349.0V360.6M1344.5 327.3V360.0M1345.5 324.6V362.2M1346.5 323.3V360.7M1347.5 326.0V370.7M1348.5 323.8V361.1M1349.5 320.6V358.4M1350.5 322.6V359.4M1351.5 321.0V361.9M1352.5 320.2V358.5" stroke="#e31c42" stroke-width="1" fill="none"/><path d="M1352.4 320 L1353.2 330.8 L1355 342 L1358 346.25 L1365 348.4 L1375 348.8 L1375 350.3 L1352.6 350.2Z" fill="#e31c42" stroke="#e31c42" stroke-width="0.6"/><path d="M1375.5 334.0V370.2M1376.5 349.0V370.0M1377.5 349.0V369.4M1378.5 332.9V367.1M1379.5 335.1V365.9M1380.5 329.7V365.5M1381.5 331.3V366.4M1382.5 324.4V366.4M1383.5 324.2V368.4M1384.5 320.4V367.5M1385.5 319.4V371.1M1386.5 319.9V371.9" stroke="#e8365c" stroke-width="1" fill="none"/><path d="M1375.5 349.0V368.9M1376.5 349.0V362.6M1377.5 349.0V359.2M1378.5 349.0V363.6M1379.5 330.5V363.7M1380.5 332.0V358.0M1381.5 332.3V358.2M1382.5 330.2V357.1M1383.5 324.5V361.7M1384.5 322.0V362.5M1385.5 319.6V358.8M1386.5 323.2V358.4" stroke="#e31c42" stroke-width="1" fill="none"/><path d="M1386 320 L1387 332.2 L1389 344.1 L1393 347 L1400 348.6 L1421 348.8 L1421 350.2 L1386.3 350.2Z" fill="#e31c42" stroke="#e31c42" stroke-width="0.6"/><path d="M1421.5 349.0V364.0M1422.5 334.9V362.4M1423.5 333.5V364.7M1424.5 334.7V365.9M1425.5 331.6V364.8M1426.5 331.0V364.7M1427.5 327.4V365.1M1428.5 326.0V361.5M1429.5 328.3V365.8M1430.5 324.3V369.8M1431.5 325.0V371.9M1432.5 320.7V368.8M1433.5 319.9V372.3M1434.5 318.0V372.4" stroke="#e8365c" stroke-width="1" fill="none"/><path d="M1421.5 342.1V359.8M1422.5 349.0V356.5M1423.5 349.0V358.2M1424.5 333.6V360.2M1425.5 349.0V355.7M1426.5 349.0V360.3M1427.5 329.4V363.6M1428.5 331.5V357.4M1429.5 328.7V365.8M1430.5 325.6V364.2M1431.5 324.0V358.0M1432.5 326.6V361.6M1433.5 326.0V363.7M1434.5 320.4V366.1" stroke="#e31c42" stroke-width="1" fill="none"/><path d="M1434.8 320 L1436 332.2 L1438 344.1 L1441 347.7 L1446 348.8 L1446 350.2 L1435.1 350.2Z" fill="#e31c42" stroke="#e31c42" stroke-width="0.6"/><line x1="1446" y1="349.5" x2="1751" y2="349.5" stroke="#e31c42" stroke-width="1.2"/></g>
<g clip-path="url(#cs3)"><polyline points="3.0,477.5 205.0,477.5 212.0,475.6 220.0,473.0 226.0,471.2 232.0,469.5 238.0,467.9 245.0,466.2 251.0,465.2 257.0,464.5 298.0,464.5 298.5,465.5 322.0,465.5 322.5,466.2 350.0,466.2 350.5,467.0 636.0,467.0 636.5,466.2 665.0,466.2 665.5,467.0 690.0,467.0 690.5,466.2 743.0,466.2 743.5,465.5 795.0,465.5 795.5,464.5 813.0,464.5 813.5,463.5 824.0,463.5 824.5,464.5 831.0,464.5 831.5,463.5 842.0,463.5 842.5,462.5 866.0,462.5 866.5,463.5 872.0,463.5 872.5,462.5 881.0,462.5 881.5,463.5 888.0,463.5 888.5,462.5 892.0,462.5 892.5,463.5 899.0,463.5 899.5,462.5 907.0,462.5 907.5,463.5 922.0,463.5 922.5,462.5 938.0,462.5 938.5,463.5 959.0,463.5 959.5,462.5 971.0,462.5 971.5,463.5 999.0,463.5 999.5,462.5 1010.0,462.5 1010.5,463.5 1025.0,463.5 1025.5,464.2 1036.0,464.2 1036.5,465.5 1050.0,465.5 1050.5,464.2 1064.0,464.2 1064.5,465.2 1078.0,465.2 1078.5,466.2 1098.0,466.2 1098.5,465.2 1119.0,465.2 1119.5,466.2 1153.0,466.2 1153.5,467.5 1167.0,467.5 1167.5,468.2 1190.0,468.2 1190.5,469.5 1208.0,469.5 1208.5,470.5 1217.0,470.5 1218.0,468.2 1228.0,468.2 1230.0,469.3 1233.0,470.0 1237.0,471.0 1240.0,471.8 1245.0,472.6 1250.0,473.2 1255.0,474.0 1260.0,474.5 1265.0,475.0 1270.0,475.5 1275.0,476.0 1280.0,476.5 1314.0,476.5 1314.5,477.5 1751.0,477.5" fill="none" stroke="#84c225" stroke-width="1.0" /></g>
<g clip-path="url(#cs4)"><line x1="3" y1="583.5" x2="1751" y2="583.5" stroke="#f59a35" stroke-width="1.4"/></g>
<g clip-path="url(#cs5)"><polyline points="3.0,745.6 55.5,745.6 55.5,654.3" fill="none" stroke="#1f1fb4" stroke-width="1.1" /><polyline points="55.5,654.3 72.5,654.3 73.0,651.0 73.5,647.3 74.0,650.0 74.8,653.0 76.0,654.3 80.0,654.3 81.0,653.5 83.5,653.0 84.3,654.0 84.5,643.0" fill="none" stroke="#1f1fb4" stroke-width="1.1" /><polyline points="88.6,643.0 89.3,645.0 90.0,648.5 90.8,651.5 91.8,653.6 93.0,654.3" fill="none" stroke="#1f1fb4" stroke-width="1.1" /><line x1="93" y1="654.4" x2="1218.3" y2="654.4" stroke="#1f1fb4" stroke-width="1.2"/><rect x="100" y="653" width="2" height="1" fill="#1f1fb4"/><rect x="106" y="653" width="1" height="1" fill="#1f1fb4"/><rect x="113" y="653" width="5" height="1" fill="#1f1fb4"/><rect x="126" y="653" width="3" height="1" fill="#1f1fb4"/><rect x="145" y="653" width="1" height="1" fill="#1f1fb4"/><rect x="150" y="653" width="5" height="1" fill="#1f1fb4"/><rect x="191" y="653" width="1" height="1" fill="#1f1fb4"/><rect x="202" y="653" width="1" height="1" fill="#1f1fb4"/><rect x="221" y="653" width="1" height="1" fill="#1f1fb4"/><rect x="239" y="653" width="3" height="1" fill="#1f1fb4"/><rect x="251" y="653" width="1" height="1" fill="#1f1fb4"/><rect x="280" y="653" width="1" height="1" fill="#1f1fb4"/><rect x="293" y="653" width="1" height="1" fill="#1f1fb4"/><rect x="311" y="653" width="1" height="1" fill="#1f1fb4"/><rect x="341" y="653" width="5" height="1" fill="#1f1fb4"/><rect x="372" y="653" width="3" height="1" fill="#1f1fb4"/><rect x="385" y="653" width="5" height="1" fill="#1f1fb4"/><rect x="428" y="653" width="5" height="1" fill="#1f1fb4"/><rect x="435" y="653" width="1" height="1" fill="#1f1fb4"/><rect x="458" y="653" width="1" height="1" fill="#1f1fb4"/><rect x="464" y="653" width="1" height="1" fill="#1f1fb4"/><rect x="470" y="653" width="5" height="1" fill="#1f1fb4"/><rect x="482" y="653" width="5" height="1" fill="#1f1fb4"/><rect x="494" y="653" width="1" height="1" fill="#1f1fb4"/><rect x="503" y="653" width="1" height="1" fill="#1f1fb4"/><rect x="525" y="653" width="2" height="1" fill="#1f1fb4"/><rect x="535" y="653" width="1" height="1" fill="#1f1fb4"/><rect x="541" y="653" width="1" height="1" fill="#1f1fb4"/><rect x="551" y="653" width="1" height="1" fill="#1f1fb4"/><rect x="565" y="653" width="2" height="1" fill="#1f1fb4"/><rect x="571" y="653" width="2" height="1" fill="#1f1fb4"/><rect x="576" y="653" width="5" height="1" fill="#1f1fb4"/><rect x="582" y="653" width="3" height="1" fill="#1f1fb4"/><rect x="601" y="653" width="1" height="1" fill="#1f1fb4"/><rect x="612" y="653" width="5" height="1" fill="#1f1fb4"/><rect x="624" y="653" width="1" height="1" fill="#1f1fb4"/><rect x="638" y="653" width="1" height="1" fill="#1f1fb4"/><rect x="652" y="653" width="1" height="1" fill="#1f1fb4"/><rect x="669" y="653" width="5" height="1" fill="#1f1fb4"/><rect x="724" y="653" width="5" height="1" fill="#1f1fb4"/><rect x="733" y="653" width="1" height="1" fill="#1f1fb4"/><rect x="744" y="653" width="3" height="1" fill="#1f1fb4"/><rect x="752" y="653" width="1" height="1" fill="#1f1fb4"/><rect x="763" y="653" width="1" height="1" fill="#1f1fb4"/><rect x="775" y="653" width="5" height="1" fill="#1f1fb4"/><rect x="806" y="653" width="1" height="1" fill="#1f1fb4"/><rect x="813" y="653" width="5" height="1" fill="#1f1fb4"/><rect x="862" y="653" width="1" height="1" fill="#1f1fb4"/><rect x="870" y="653" width="1" height="1" fill="#1f1fb4"/><rect x="874" y="653" width="1" height="1" fill="#1f1fb4"/><rect x="915" y="653" width="5" height="1" fill="#1f1fb4"/><rect x="926" y="653" width="2" height="1" fill="#1f1fb4"/><rect x="939" y="653" width="1" height="1" fill="#1f1fb4"/><rect x="948" y="653" width="2" height="1" fill="#1f1fb4"/><rect x="956" y="653" width="1" height="1" fill="#1f1fb4"/><rect x="970" y="653" width="1" height="1" fill="#1f1fb4"/><rect x="1023" y="653" width="2" height="1" fill="#1f1fb4"/><rect x="1031" y="653" width="2" height="1" fill="#1f1fb4"/><rect x="1040" y="653" width="3" height="1" fill="#1f1fb4"/><rect x="1047" y="653" width="2" height="1" fill="#1f1fb4"/><rect x="1065" y="653" width="1" height="1" fill="#1f1fb4"/><rect x="1071" y="653" width="1" height="1" fill="#1f1fb4"/><rect x="1091" y="653" width="1" height="1" fill="#1f1fb4"/><rect x="1098" y="653" width="5" height="1" fill="#1f1fb4"/><rect x="1118" y="653" width="5" height="1" fill="#1f1fb4"/><rect x="1130" y="653" width="5" height="1" fill="#1f1fb4"/><rect x="1137" y="653" width="2" height="1" fill="#1f1fb4"/><rect x="1157" y="653" width="1" height="1" fill="#1f1fb4"/><rect x="1167" y="653" width="2" height="1" fill="#1f1fb4"/><rect x="1171" y="653" width="1" height="1" fill="#1f1fb4"/><rect x="1193" y="653" width="3" height="1" fill="#1f1fb4"/><line x1="1003.5" y1="650.5" x2="1003.5" y2="654" stroke="#1f1fb4" stroke-width="1"/><polyline points="1217.5,654.4 1218.3,654.0 1218.6,643.0" fill="none" stroke="#1f1fb4" stroke-width="1.1" /><polyline points="1225.2,643.0 1225.6,646.0 1226.3,649.5 1227.0,652.5 1228.0,654.4" fill="none" stroke="#1f1fb4" stroke-width="1.1" /><line x1="1228" y1="654.4" x2="1751" y2="654.4" stroke="#1f1fb4" stroke-width="1.2"/><line x1="1237.0" y1="651.5" x2="1237.0" y2="654.4" stroke="#1f1fb4" stroke-width="1"/><line x1="1240.4" y1="651.5" x2="1240.4" y2="654.4" stroke="#1f1fb4" stroke-width="1"/><line x1="1242.3" y1="651.5" x2="1242.3" y2="654.4" stroke="#1f1fb4" stroke-width="1"/><line x1="1245.6" y1="651.5" x2="1245.6" y2="654.4" stroke="#1f1fb4" stroke-width="1"/><line x1="1248.3" y1="651.5" x2="1248.3" y2="654.4" stroke="#1f1fb4" stroke-width="1"/><path d="M1248.7 651.1 L1249.4 651.8 L1250.1 650.7 L1250.8 651.1 L1251.5 650.9 L1252.2 650.4 L1252.9 652.0 L1253.6 651.4 L1254.3 651.0 L1255.0 651.6 L1255.7 650.6 L1256.4 650.7 L1257.1 651.4 L1257.8 651.4 L1258.5 651.6 L1259.2 650.9 L1259.9 650.1 L1260.6 650.0 L1261.3 651.9 L1262.0 650.9 L1262.7 650.1 L1263.4 651.4 L1264.1 650.1 L1264.8 650.9 L1265.5 650.3 L1266.2 650.2 L1266.9 651.4 L1267.6 650.9 L1268.3 650.8 L1269.0 650.8 L1269.7 650.3 L1270.4 652.1 L1271.1 651.0 L1271.8 651.9 L1272.5 651.8 L1273.2 651.3 L1273.9 650.5 L1274.6 651.9 L1275.3 650.9 L1276.0 650.6 L1276.7 650.2 L1277.4 650.3 L1278.1 652.1 L1278.8 650.2 L1279.5 650.3 L1280.2 650.3 L1280.9 650.2 L1281.6 650.5 L1282.3 652.0 L1283.0 651.7 L1283.7 651.2 L1284.4 650.3 L1285.1 650.7 L1285.8 650.4 L1286.5 651.4 L1286.5 654.6 L1285.8 654.6 L1285.1 654.6 L1284.4 654.6 L1283.7 654.7 L1283.0 654.6 L1282.3 654.6 L1281.6 654.6 L1280.9 654.6 L1280.2 654.6 L1279.5 654.6 L1278.8 654.6 L1278.1 654.6 L1277.4 654.6 L1276.7 654.6 L1276.0 654.6 L1275.3 654.6 L1274.6 654.6 L1273.9 654.6 L1273.2 654.6 L1272.5 654.6 L1271.8 654.6 L1271.1 654.6 L1270.4 654.6 L1269.7 654.6 L1269.0 654.6 L1268.3 654.6 L1267.6 654.6 L1266.9 654.6 L1266.2 654.6 L1265.5 654.6 L1264.8 654.6 L1264.1 654.6 L1263.4 654.6 L1262.7 654.6 L1262.0 655.1 L1261.3 654.6 L1260.6 654.6 L1259.9 654.6 L1259.2 654.6 L1258.5 654.6 L1257.8 654.6 L1257.1 654.6 L1256.4 654.6 L1255.7 654.6 L1255.0 654.6 L1254.3 654.6 L1253.6 654.6 L1252.9 654.6 L1252.2 654.6 L1251.5 654.6 L1250.8 654.6 L1250.1 654.6 L1249.4 654.6 L1248.7 654.6Z" fill="#1f1fb4" stroke="#1f1fb4" stroke-width="0.8" stroke-linejoin="round" /><path d="M1300.3 652.0 L1301.0 652.1 L1301.7 651.0 L1302.4 650.8 L1303.1 650.4 L1303.8 652.2 L1304.5 650.3 L1305.2 651.1 L1305.9 650.8 L1306.6 650.4 L1307.3 650.2 L1308.0 651.2 L1308.7 652.1 L1309.4 650.8 L1310.1 652.1 L1310.8 650.6 L1311.5 651.5 L1312.2 650.4 L1312.9 651.3 L1313.6 650.0 L1314.3 650.2 L1315.0 652.0 L1315.7 651.9 L1316.4 651.2 L1317.1 650.8 L1317.8 651.6 L1318.5 651.0 L1319.2 651.8 L1319.2 654.6 L1318.5 654.6 L1317.8 654.6 L1317.1 654.6 L1316.4 654.6 L1315.7 654.6 L1315.0 654.6 L1314.3 654.6 L1313.6 654.6 L1312.9 654.6 L1312.2 654.6 L1311.5 654.6 L1310.8 654.6 L1310.1 654.6 L1309.4 654.6 L1308.7 654.6 L1308.0 654.6 L1307.3 654.6 L1306.6 654.6 L1305.9 654.6 L1305.2 654.6 L1304.5 654.6 L1303.8 654.6 L1303.1 654.6 L1302.4 654.6 L1301.7 654.6 L1301.0 654.6 L1300.3 654.6Z" fill="#1f1fb4" stroke="#1f1fb4" stroke-width="0.8" stroke-linejoin="round" /><path d="M1337.0 651.0 L1337.7 652.0 L1338.4 650.2 L1339.1 650.2 L1339.8 650.2 L1340.5 651.9 L1341.2 650.5 L1341.9 651.9 L1342.6 650.6 L1343.3 652.1 L1344.0 651.9 L1344.7 650.5 L1345.4 650.9 L1346.1 651.1 L1346.8 652.0 L1347.5 650.7 L1348.2 650.3 L1348.9 652.1 L1349.6 652.0 L1350.3 651.0 L1351.0 650.8 L1351.7 650.2 L1351.7 654.6 L1351.0 654.6 L1350.3 654.6 L1349.6 654.6 L1348.9 654.6 L1348.2 654.6 L1347.5 654.6 L1346.8 655.1 L1346.1 654.6 L1345.4 654.6 L1344.7 654.6 L1344.0 654.6 L1343.3 654.6 L1342.6 654.6 L1341.9 654.6 L1341.2 654.6 L1340.5 654.6 L1339.8 654.6 L1339.1 654.6 L1338.4 654.6 L1337.7 654.6 L1337.0 654.6Z" fill="#1f1fb4" stroke="#1f1fb4" stroke-width="0.8" stroke-linejoin="round" /><path d="M1375.3 651.0 L1376.0 650.9 L1376.7 650.0 L1377.4 651.5 L1378.1 651.8 L1378.8 651.8 L1379.5 650.3 L1380.2 651.0 L1380.9 650.2 L1381.6 650.0 L1382.3 650.1 L1383.0 650.5 L1383.7 651.8 L1384.4 650.9 L1385.1 651.6 L1385.8 650.8 L1385.8 654.6 L1385.1 654.6 L1384.4 654.6 L1383.7 654.6 L1383.0 654.6 L1382.3 654.6 L1381.6 654.8 L1380.9 654.6 L1380.2 654.6 L1379.5 654.6 L1378.8 654.6 L1378.1 654.6 L1377.4 654.6 L1376.7 654.6 L1376.0 654.6 L1375.3 654.6Z" fill="#1f1fb4" stroke="#1f1fb4" stroke-width="0.8" stroke-linejoin="round" /><path d="M1421.4 650.9 L1422.1 651.9 L1422.8 651.2 L1423.5 650.7 L1424.2 652.0 L1424.9 650.6 L1425.6 651.4 L1426.3 651.2 L1427.0 651.8 L1427.7 650.3 L1428.4 651.3 L1429.1 650.5 L1429.8 651.4 L1430.5 651.0 L1431.2 651.7 L1431.9 650.7 L1432.6 651.7 L1433.3 650.4 L1434.0 650.6 L1434.7 650.0 L1434.7 654.6 L1434.0 654.6 L1433.3 654.6 L1432.6 654.6 L1431.9 654.6 L1431.2 654.6 L1430.5 654.6 L1429.8 654.6 L1429.1 654.6 L1428.4 654.6 L1427.7 654.6 L1427.0 654.6 L1426.3 654.6 L1425.6 654.8 L1424.9 654.6 L1424.2 655.4 L1423.5 654.6 L1422.8 654.6 L1422.1 654.6 L1421.4 654.6Z" fill="#1f1fb4" stroke="#1f1fb4" stroke-width="0.8" stroke-linejoin="round" /><rect x="1446" y="653" width="2" height="1" fill="#1f1fb4"/><rect x="1460" y="653" width="4" height="1" fill="#1f1fb4"/><rect x="1487" y="653" width="4" height="1" fill="#1f1fb4"/><rect x="1504" y="653" width="2" height="1" fill="#1f1fb4"/><rect x="1518" y="653" width="2" height="1" fill="#1f1fb4"/><rect x="1535" y="653" width="1" height="1" fill="#1f1fb4"/><rect x="1599" y="653" width="1" height="1" fill="#1f1fb4"/><rect x="1627" y="653" width="4" height="1" fill="#1f1fb4"/><rect x="1658" y="653" width="1" height="1" fill="#1f1fb4"/><rect x="1680" y="653" width="1" height="1" fill="#1f1fb4"/><rect x="1738" y="653" width="1" height="1" fill="#1f1fb4"/></g>
<g clip-path="url(#cs6)"><path d="M3.0 863.5H58.0V862.5H66.0V861.5H73.0V860.5H81.0V859.5H89.0V858.5H97.0V857.5H104.0V856.5H112.0V855.5H120.0V854.5H127.0V853.5H135.0V852.5H143.0V851.5H151.0V850.5H158.0V849.5H166.0V848.5H174.0V847.5H181.0V846.5H189.0V845.5H197.0V844.5H204.0V843.5H212.0V842.5H220.0V841.5H227.0V840.5H236.0V839.5H245.0V838.5H254.0V837.5H264.0V836.5H273.0V835.5H282.0V834.5H291.0V833.5H301.0V832.5H310.0V831.5H319.0V830.5H328.0V829.5H337.0V828.5H347.0V827.5H356.0V826.5H365.0V825.5H374.0V824.5H383.0V823.5H393.0V822.5H402.0V821.5H412.0V820.5H423.0V819.5H433.0V818.5H444.0V817.5H455.0V816.5H466.0V815.5H476.0V814.5H487.0V813.5H498.0V812.5H509.0V811.5H519.0V810.5H530.0V809.5H541.0V808.5H552.0V807.5H562.0V806.5H573.0V805.5H585.0V804.5H598.0V803.5H612.0V802.5H625.0V801.5H639.0V800.5H652.0V799.5H666.0V798.5H680.0V797.5H693.0V796.5H707.0V795.5H720.0V794.5H734.0V793.5H747.0V792.5H763.0V791.5H781.0V790.5H798.0V789.5H816.0V788.5H834.0V787.5H852.0V786.5H870.0V785.5H888.0V784.5H906.0V783.5H923.0V782.5H948.0V781.5H977.0V780.5H1006.0V779.5H1035.0V778.5H1064.0V777.5H1093.0V776.5H1125.0V775.5H1159.0V774.5H1194.0V773.5H1232.0V772.5H1524.0V773.5H1538.0V774.5H1613.0V775.5H1684.0V776.5H1718.0V777.5H1751.0" fill="none" stroke="#ee8f22" stroke-width="1"/></g>
<g clip-path="url(#cs7)"><line x1="3" y1="906.8" x2="55.5" y2="906.8" stroke="#5d2282" stroke-width="1.5"/><polyline points="55.5,906.8 56.0,877.0 56.3,895.0 56.6,926.7 57.0,900.0 57.4,900.2 58.2,910.8 59.0,899.9 59.8,908.5 60.6,901.2 61.4,908.9 62.2,902.1 63.0,907.3 63.8,903.6 64.6,907.4 65.4,902.8 66.2,906.9 67.0,903.5 67.8,906.8 68.6,903.3 69.4,907.3 70.2,904.0 71.0,907.1 71.8,904.4 72.6,906.8 73.4,903.8 74.2,906.2 75.0,904.1 75.8,906.4 76.6,904.0 77.4,906.1 78.2,904.3 79.0,906.5 79.8,904.3 80.6,906.1 81.4,904.7 82.3,905.0 82.5,890.0 82.8,938.9 83.2,895.0 83.6,932.0 84.0,903.0 84.4,930.0 84.9,910.0 85.4,926.0 86.0,914.0 86.6,923.0 87.2,923.0 88.1,920.6 89.0,923.3 89.9,919.4 90.8,922.5 91.7,922.5 92.6,922.7 93.5,919.0 94.4,920.0 95.3,918.6 96.2,920.5 97.1,919.0 98.0,920.4 98.9,918.4 99.8,919.1 100.7,919.1 101.6,917.3 102.5,917.9 103.4,918.5 104.3,917.4 105.2,916.8 106.1,916.4 107.0,917.2 107.9,915.9 108.8,916.5 109.7,916.2 110.6,915.9 111.5,914.9 112.4,915.5 113.3,915.7 114.2,914.4 115.1,914.2 116.0,914.8 116.9,914.0 117.8,913.3 118.7,912.6 119.6,913.4 120.5,912.6 121.4,912.5 122.3,911.9 123.2,912.1 124.1,912.0 125.0,911.2 125.9,910.7 126.8,911.7 127.7,911.5 128.6,910.3 129.5,910.8 130.4,910.8 131.3,910.3 132.2,910.6 133.1,910.7 134.0,910.1 134.9,909.8 135.8,909.4 136.7,909.3 137.6,909.1 138.5,908.9 139.4,908.9 140.3,909.5 141.2,909.0 142.1,909.2 143.0,909.2 143.9,908.9 144.8,908.0 145.7,908.8 146.6,907.8 147.5,908.4 148.4,908.4 149.3,908.1 150.2,907.7 151.1,907.2 152.0,907.1 152.9,907.6 153.8,907.0 154.7,907.2 155.6,906.8 156.5,906.6 157.4,906.6 158.3,907.0 159.2,906.6 160.1,906.4 161.0,906.4 161.9,906.4 162.8,906.3 163.7,906.2 164.6,906.7 165.5,906.4 166.4,905.8 167.3,905.9 168.2,905.7 169.1,905.8 170.0,905.4 170.9,906.1 171.8,905.9 172.7,905.7 173.6,906.1 174.5,905.4 175.4,905.7 176.3,906.0 177.2,905.5 178.1,905.5 179.0,905.2 179.9,905.9 180.8,905.5 181.7,905.0 182.6,905.0 183.5,905.2 184.4,905.1 185.3,905.0 186.2,904.6 187.1,905.0 188.0,905.1 188.9,905.1 189.8,904.7 190.7,904.7 191.6,904.7 192.5,904.7 193.4,904.6 194.3,904.0 195.2,904.2 196.1,904.6 197.0,904.1 197.9,903.4 198.8,903.4 199.0,903.0 200.3,901.0 201.5,897.6 202.3,893.5 203.0,888.5 203.7,883.0 204.3,877.0" fill="none" stroke="#5d2282" stroke-width="1.0" /><path d="M1248.5 877.0V882.7M1249.5 877.0V883.6M1250.5 877.0V883.3M1252.5 877.0V888.7M1254.5 877.0V891.5M1255.5 877.0V892.7M1256.5 877.0V892.9M1257.5 877.0V892.0M1259.5 877.0V896.3M1260.5 877.0V895.9M1262.5 877.0V889.1M1263.5 877.0V886.7M1264.5 877.0V887.5M1265.5 877.0V891.2M1266.5 877.0V891.8M1267.5 877.0V887.6M1268.5 877.0V889.8M1269.5 877.0V892.2M1270.5 877.0V892.6M1271.5 877.0V890.4M1272.5 877.0V887.9M1273.5 877.0V890.7M1274.5 877.0V892.3M1275.5 877.0V891.2M1276.5 877.0V892.6M1277.5 877.0V892.1M1278.5 877.0V890.2M1279.5 877.0V890.4M1280.5 877.0V892.3M1281.5 877.0V890.7M1282.5 877.0V891.3M1283.5 877.0V893.6M1284.5 877.0V890.6M1285.5 877.0V893.5M1286.5 877.0V892.5" stroke="#5d2282" stroke-width="1" fill="none"/><path d="M1301.5 877.0V896.4M1302.5 877.0V902.8M1303.5 877.0V906.6M1304.5 877.0V906.6M1305.5 877.0V905.3M1306.5 877.0V910.4M1307.5 877.0V907.4M1309.5 877.0V903.9M1310.5 877.0V898.1M1311.5 877.0V899.5M1312.5 877.0V896.2M1313.5 877.0V898.3M1314.5 877.0V896.4M1315.5 877.0V889.9M1316.5 877.0V894.4M1317.5 877.0V896.4M1318.5 877.0V894.0" stroke="#5d2282" stroke-width="1" fill="none"/><path d="M1336.5 877.0V897.0M1337.5 877.0V902.9M1338.5 877.0V900.4M1340.5 877.0V908.6M1342.5 877.0V908.9M1344.5 877.0V900.5M1345.5 877.0V900.6M1346.5 877.0V900.3M1347.5 877.0V895.6M1348.5 877.0V895.7M1349.5 877.0V893.6M1350.5 877.0V892.9M1351.5 877.0V893.7M1352.5 877.0V895.5" stroke="#5d2282" stroke-width="1" fill="none"/><polyline points="1371.3,877.0 1372.0,880.5 1374.0,878.5 1375.0,877.0" fill="none" stroke="#5d2282" stroke-width="1.2" /><path d="M1375.5 877.0V905.7M1377.5 877.0V906.2M1379.5 877.0V899.9M1380.5 877.0V899.3M1381.5 877.0V896.9M1382.5 877.0V901.5M1383.5 877.0V900.3M1384.5 877.0V895.4M1385.5 877.0V889.7M1386.5 877.0V885.1" stroke="#5d2282" stroke-width="1" fill="none"/><path d="M1421.5 877.0V898.1M1422.5 877.0V898.4M1423.5 877.0V896.7M1424.5 877.0V894.9M1425.5 877.0V896.7M1426.5 877.0V894.5M1427.5 877.0V894.8M1428.5 877.0V895.3M1429.5 877.0V892.5M1430.5 877.0V889.3M1431.5 877.0V887.0M1432.5 877.0V889.0M1433.5 877.0V883.8M1434.5 877.0V882.1" stroke="#5d2282" stroke-width="1" fill="none"/><polyline points="1448.3,877.0 1448.3,883.4 1450.0,883.0 1452.0,882.0 1455.0,880.0 1458.0,878.9 1466.0,879.6 1475.0,880.0 1490.0,879.8 1500.0,878.9 1515.0,878.2 1536.5,877.7" fill="none" stroke="#5d2282" stroke-width="1.5" /></g>
<g id="grid"><line x1="20" y1="58.5" x2="1751" y2="58.5" stroke="#3a3a3a" stroke-width="1" stroke-dasharray="1 33.98"/><line x1="20" y1="69.5" x2="1751" y2="69.5" stroke="#3a3a3a" stroke-width="1" stroke-dasharray="1 33.98"/><line x1="20" y1="81.5" x2="1751" y2="81.5" stroke="#3a3a3a" stroke-width="1" stroke-dasharray="1 33.98"/><line x1="20" y1="92.5" x2="1751" y2="92.5" stroke="#3a3a3a" stroke-width="1" stroke-dasharray="1 33.98"/><line x1="20" y1="104.5" x2="1751" y2="104.5" stroke="#3a3a3a" stroke-width="1" stroke-dasharray="1 33.98"/><line x1="20" y1="115.5" x2="1751" y2="115.5" stroke="#3a3a3a" stroke-width="1" stroke-dasharray="1 33.98"/><line x1="20" y1="127.5" x2="1751" y2="127.5" stroke="#3a3a3a" stroke-width="1" stroke-dasharray="1 33.98"/><line x1="20" y1="139.5" x2="1751" y2="139.5" stroke="#3a3a3a" stroke-width="1" stroke-dasharray="1 33.98"/><line x1="20" y1="150.5" x2="1751" y2="150.5" stroke="#3a3a3a" stroke-width="1" stroke-dasharray="1 33.98"/><line x1="20" y1="162.5" x2="1751" y2="162.5" stroke="#3a3a3a" stroke-width="1" stroke-dasharray="1 33.98"/><line x1="20" y1="174.5" x2="1751" y2="174.5" stroke="#3a3a3a" stroke-width="1" stroke-dasharray="1 33.98"/><line x1="20" y1="177.5" x2="1751" y2="177.5" stroke="#3a3a3a" stroke-width="1" stroke-dasharray="1 33.98"/><line x1="20" y1="188.5" x2="1751" y2="188.5" stroke="#3a3a3a" stroke-width="1" stroke-dasharray="1 33.98"/><line x1="20" y1="200.5" x2="1751" y2="200.5" stroke="#3a3a3a" stroke-width="1" stroke-dasharray="1 33.98"/><line x1="20" y1="211.5" x2="1751" y2="211.5" stroke="#3a3a3a" stroke-width="1" stroke-dasharray="1 33.98"/><line x1="20" y1="223.5" x2="1751" y2="223.5" stroke="#3a3a3a" stroke-width="1" stroke-dasharray="1 33.98"/><line x1="20" y1="235.5" x2="1751" y2="235.5" stroke="#3a3a3a" stroke-width="1" stroke-dasharray="1 33.98"/><line x1="20" y1="246.5" x2="1751" y2="246.5" stroke="#3a3a3a" stroke-width="1" stroke-dasharray="1 33.98"/><line x1="20" y1="258.5" x2="1751" y2="258.5" stroke="#3a3a3a" stroke-width="1" stroke-dasharray="1 33.98"/><line x1="20" y1="270.5" x2="1751" y2="270.5" stroke="#3a3a3a" stroke-width="1" stroke-dasharray="1 33.98"/><line x1="20" y1="281.5" x2="1751" y2="281.5" stroke="#3a3a3a" stroke-width="1" stroke-dasharray="1 33.98"/><line x1="20" y1="292.5" x2="1751" y2="292.5" stroke="#3a3a3a" stroke-width="1" stroke-dasharray="1 33.98"/><line x1="20" y1="303.5" x2="1751" y2="303.5" stroke="#3a3a3a" stroke-width="1" stroke-dasharray="1 33.98"/><line x1="20" y1="315.5" x2="1751" y2="315.5" stroke="#3a3a3a" stroke-width="1" stroke-dasharray="1 33.98"/><line x1="20" y1="327.5" x2="1751" y2="327.5" stroke="#3a3a3a" stroke-width="1" stroke-dasharray="1 33.98"/><line x1="20" y1="338.5" x2="1751" y2="338.5" stroke="#3a3a3a" stroke-width="1" stroke-dasharray="1 33.98"/><line x1="20" y1="350.5" x2="1751" y2="350.5" stroke="#3a3a3a" stroke-width="1" stroke-dasharray="1 33.98"/><line x1="20" y1="362.5" x2="1751" y2="362.5" stroke="#3a3a3a" stroke-width="1" stroke-dasharray="1 33.98"/><line x1="20" y1="373.5" x2="1751" y2="373.5" stroke="#3a3a3a" stroke-width="1" stroke-dasharray="1 33.98"/><line x1="20" y1="385.5" x2="1751" y2="385.5" stroke="#3a3a3a" stroke-width="1" stroke-dasharray="1 33.98"/><line x1="20" y1="396.5" x2="1751" y2="396.5" stroke="#3a3a3a" stroke-width="1" stroke-dasharray="1 33.98"/><line x1="20" y1="408.5" x2="1751" y2="408.5" stroke="#3a3a3a" stroke-width="1" stroke-dasharray="1 33.98"/><line x1="20" y1="409.5" x2="1751" y2="409.5" stroke="#3a3a3a" stroke-width="1" stroke-dasharray="1 33.98"/><line x1="20" y1="420.5" x2="1751" y2="420.5" stroke="#3a3a3a" stroke-width="1" stroke-dasharray="1 33.98"/><line x1="20" y1="432.5" x2="1751" y2="432.5" stroke="#3a3a3a" stroke-width="1" stroke-dasharray="1 33.98"/><line x1="20" y1="444.5" x2="1751" y2="444.5" stroke="#3a3a3a" stroke-width="1" stroke-dasharray="1 33.98"/><line x1="20" y1="455.5" x2="1751" y2="455.5" stroke="#3a3a3a" stroke-width="1" stroke-dasharray="1 33.98"/><line x1="20" y1="467.5" x2="1751" y2="467.5" stroke="#3a3a3a" stroke-width="1" stroke-dasharray="1 33.98"/><line x1="20" y1="479.5" x2="1751" y2="479.5" stroke="#3a3a3a" stroke-width="1" stroke-dasharray="1 33.98"/><line x1="20" y1="490.5" x2="1751" y2="490.5" stroke="#3a3a3a" stroke-width="1" stroke-dasharray="1 33.98"/><line x1="20" y1="502.5" x2="1751" y2="502.5" stroke="#3a3a3a" stroke-width="1" stroke-dasharray="1 33.98"/><line x1="20" y1="513.5" x2="1751" y2="513.5" stroke="#3a3a3a" stroke-width="1" stroke-dasharray="1 33.98"/><line x1="20" y1="525.5" x2="1751" y2="525.5" stroke="#3a3a3a" stroke-width="1" stroke-dasharray="1 33.98"/><line x1="20" y1="526.5" x2="1751" y2="526.5" stroke="#3a3a3a" stroke-width="1" stroke-dasharray="1 33.98"/><line x1="20" y1="537.5" x2="1751" y2="537.5" stroke="#3a3a3a" stroke-width="1" stroke-dasharray="1 33.98"/><line x1="20" y1="549.5" x2="1751" y2="549.5" stroke="#3a3a3a" stroke-width="1" stroke-dasharray="1 33.98"/><line x1="20" y1="561.5" x2="1751" y2="561.5" stroke="#3a3a3a" stroke-width="1" stroke-dasharray="1 33.98"/><line x1="20" y1="572.5" x2="1751" y2="572.5" stroke="#3a3a3a" stroke-width="1" stroke-dasharray="1 33.98"/><line x1="20" y1="584.5" x2="1751" y2="584.5" stroke="#3a3a3a" stroke-width="1" stroke-dasharray="1 33.98"/><line x1="20" y1="595.5" x2="1751" y2="595.5" stroke="#3a3a3a" stroke-width="1" stroke-dasharray="1 33.98"/><line x1="20" y1="607.5" x2="1751" y2="607.5" stroke="#3a3a3a" stroke-width="1" stroke-dasharray="1 33.98"/><line x1="20" y1="619.5" x2="1751" y2="619.5" stroke="#3a3a3a" stroke-width="1" stroke-dasharray="1 33.98"/><line x1="20" y1="630.5" x2="1751" y2="630.5" stroke="#3a3a3a" stroke-width="1" stroke-dasharray="1 33.98"/><line x1="20" y1="642.5" x2="1751" y2="642.5" stroke="#3a3a3a" stroke-width="1" stroke-dasharray="1 33.98"/><line x1="20" y1="643.5" x2="1751" y2="643.5" stroke="#3a3a3a" stroke-width="1" stroke-dasharray="1 33.98"/><line x1="20" y1="654.5" x2="1751" y2="654.5" stroke="#3a3a3a" stroke-width="1" stroke-dasharray="1 33.98"/><line x1="20" y1="666.5" x2="1751" y2="666.5" stroke="#3a3a3a" stroke-width="1" stroke-dasharray="1 33.98"/><line x1="20" y1="678.5" x2="1751" y2="678.5" stroke="#3a3a3a" stroke-width="1" stroke-dasharray="1 33.98"/><line x1="20" y1="689.5" x2="1751" y2="689.5" stroke="#3a3a3a" stroke-width="1" stroke-dasharray="1 33.98"/><line x1="20" y1="701.5" x2="1751" y2="701.5" stroke="#3a3a3a" stroke-width="1" stroke-dasharray="1 33.98"/><line x1="20" y1="713.5" x2="1751" y2="713.5" stroke="#3a3a3a" stroke-width="1" stroke-dasharray="1 33.98"/><line x1="20" y1="724.5" x2="1751" y2="724.5" stroke="#3a3a3a" stroke-width="1" stroke-dasharray="1 33.98"/><line x1="20" y1="736.5" x2="1751" y2="736.5" stroke="#3a3a3a" stroke-width="1" stroke-dasharray="1 33.98"/><line x1="20" y1="747.5" x2="1751" y2="747.5" stroke="#3a3a3a" stroke-width="1" stroke-dasharray="1 33.98"/><line x1="20" y1="759.5" x2="1751" y2="759.5" stroke="#3a3a3a" stroke-width="1" stroke-dasharray="1 33.98"/><line x1="20" y1="760.5" x2="1751" y2="760.5" stroke="#3a3a3a" stroke-width="1" stroke-dasharray="1 33.98"/><line x1="20" y1="771.5" x2="1751" y2="771.5" stroke="#3a3a3a" stroke-width="1" stroke-dasharray="1 33.98"/><line x1="20" y1="783.5" x2="1751" y2="783.5" stroke="#3a3a3a" stroke-width="1" stroke-dasharray="1 33.98"/><line x1="20" y1="795.5" x2="1751" y2="795.5" stroke="#3a3a3a" stroke-width="1" stroke-dasharray="1 33.98"/><line x1="20" y1="806.5" x2="1751" y2="806.5" stroke="#3a3a3a" stroke-width="1" stroke-dasharray="1 33.98"/><line x1="20" y1="818.5" x2="1751" y2="818.5" stroke="#3a3a3a" stroke-width="1" stroke-dasharray="1 33.98"/><line x1="20" y1="829.5" x2="1751" y2="829.5" stroke="#3a3a3a" stroke-width="1" stroke-dasharray="1 33.98"/><line x1="20" y1="841.5" x2="1751" y2="841.5" stroke="#3a3a3a" stroke-width="1" stroke-dasharray="1 33.98"/><line x1="20" y1="853.5" x2="1751" y2="853.5" stroke="#3a3a3a" stroke-width="1" stroke-dasharray="1 33.98"/><line x1="20" y1="864.5" x2="1751" y2="864.5" stroke="#3a3a3a" stroke-width="1" stroke-dasharray="1 33.98"/><line x1="20" y1="876.5" x2="1751" y2="876.5" stroke="#3a3a3a" stroke-width="1" stroke-dasharray="1 33.98"/><line x1="20" y1="875.5" x2="1751" y2="875.5" stroke="#3a3a3a" stroke-width="1" stroke-dasharray="1 33.98"/><line x1="20" y1="886.5" x2="1751" y2="886.5" stroke="#3a3a3a" stroke-width="1" stroke-dasharray="1 33.98"/><line x1="20" y1="898.5" x2="1751" y2="898.5" stroke="#3a3a3a" stroke-width="1" stroke-dasharray="1 33.98"/><line x1="20" y1="909.5" x2="1751" y2="909.5" stroke="#3a3a3a" stroke-width="1" stroke-dasharray="1 33.98"/><line x1="20" y1="921.5" x2="1751" y2="921.5" stroke="#3a3a3a" stroke-width="1" stroke-dasharray="1 33.98"/><line x1="20" y1="933.5" x2="1751" y2="933.5" stroke="#3a3a3a" stroke-width="1" stroke-dasharray="1 33.98"/><line x1="20" y1="944.5" x2="1751" y2="944.5" stroke="#3a3a3a" stroke-width="1" stroke-dasharray="1 33.98"/><line x1="20" y1="956.5" x2="1751" y2="956.5" stroke="#3a3a3a" stroke-width="1" stroke-dasharray="1 33.98"/><line x1="20" y1="967.5" x2="1751" y2="967.5" stroke="#3a3a3a" stroke-width="1" stroke-dasharray="1 33.98"/><line x1="20" y1="979.5" x2="1751" y2="979.5" stroke="#3a3a3a" stroke-width="1" stroke-dasharray="1 33.98"/><line x1="20" y1="991.5" x2="1751" y2="991.5" stroke="#3a3a3a" stroke-width="1" stroke-dasharray="1 33.98"/><line x1="20" y1="991.5" x2="1751" y2="991.5" stroke="#3a3a3a" stroke-width="1" stroke-dasharray="1 33.98"/><line x1="230.5" y1="58" x2="230.5" y2="993" stroke="#585858" stroke-width="1" stroke-dasharray="1 1"/><line x1="405.5" y1="58" x2="405.5" y2="993" stroke="#585858" stroke-width="1" stroke-dasharray="1 1"/><line x1="580.5" y1="58" x2="580.5" y2="993" stroke="#585858" stroke-width="1" stroke-dasharray="1 1"/><line x1="755.5" y1="58" x2="755.5" y2="993" stroke="#585858" stroke-width="1" stroke-dasharray="1 1"/><line x1="929.5" y1="58" x2="929.5" y2="993" stroke="#585858" stroke-width="1" stroke-dasharray="1 1"/><line x1="1104.5" y1="58" x2="1104.5" y2="993" stroke="#585858" stroke-width="1" stroke-dasharray="1 1"/><line x1="1279.5" y1="58" x2="1279.5" y2="993" stroke="#585858" stroke-width="1" stroke-dasharray="1 1"/><line x1="1454.5" y1="58" x2="1454.5" y2="993" stroke="#585858" stroke-width="1" stroke-dasharray="1 1"/><line x1="1629.5" y1="58" x2="1629.5" y2="993" stroke="#585858" stroke-width="1" stroke-dasharray="1 1"/><line x1="55.5" y1="63" x2="55.5" y2="993" stroke="#333" stroke-width="1" stroke-dasharray="5 5"/></g>
<g id="seps"><rect x="3" y="173" width="1748" height="2" fill="#555"/><rect x="3" y="290" width="1748" height="2" fill="#555"/><rect x="3" y="407" width="1748" height="2" fill="#555"/><rect x="3" y="524" width="1748" height="2" fill="#555"/><rect x="3" y="641" width="1748" height="2" fill="#555"/><rect x="3" y="758" width="1748" height="2" fill="#555"/><rect x="3" y="875" width="1748" height="2" fill="#555"/></g>
<g id="zeros"><line x1="5" y1="161.5" x2="1718" y2="161.5" stroke="#333" stroke-width="1" stroke-dasharray="5 5"/><line x1="5" y1="246.5" x2="1740" y2="246.5" stroke="#333" stroke-width="1" stroke-dasharray="5 5"/><line x1="5" y1="349.5" x2="1722" y2="349.5" stroke="#333" stroke-width="1" stroke-dasharray="5 5"/><line x1="5" y1="478.5" x2="1740" y2="478.5" stroke="#333" stroke-width="1" stroke-dasharray="5 5"/><line x1="5" y1="583.5" x2="1722" y2="583.5" stroke="#333" stroke-width="1" stroke-dasharray="5 5"/><line x1="5" y1="863.5" x2="1718" y2="863.5" stroke="#333" stroke-width="1" stroke-dasharray="5 5"/><line x1="5" y1="979.5" x2="1718" y2="979.5" stroke="#333" stroke-width="1" stroke-dasharray="5 5"/></g>
</svg>
<svg class="abs" style="left:3px;top:58px" width="1748" height="935" viewBox="3 58 1748 935">
<polygon points="44.7,58 65.4,58 55.2,68" fill="#f7901e"/>
<path d="M45.8 644H64.6V663H59.5L55.3 670.2L51.2 663H45.8Z" fill="#000" stroke="#f7901e" stroke-width="2"/>
<path d="M50.4 648.6H60.2M55.3 648.6V659.6" stroke="#f7901e" stroke-width="2.6" fill="none"/>
</svg>
<svg class="abs" style="left:4px;top:100.4px" width="84" height="30" viewBox="4 100.4 84 30"><path d="M10.1 103.2H76.67999999999999L82.67999999999999 115.6L76.67999999999999 128.0H10.1Q7.1 128.0 7.1 125.0V106.2Q7.1 103.2 10.1 103.2Z" fill="#e6e6e6" stroke="#1d1d1d" stroke-width="1.6" stroke-linejoin="round"/><line x1="32.8" y1="103.2" x2="32.8" y2="128.0" stroke="#1d1d1d" stroke-width="1.6"/></svg><span class="t" style="left:11.00px;top:109.00px;font-size:12.3px;color:#111;word-spacing:-0.60px;">C 1</span><span class="t" style="left:43.65px;top:109.00px;font-size:12.3px;color:#111;">20 V</span>
<svg class="abs" style="left:4px;top:217.7px" width="84" height="30" viewBox="4 217.7 84 30"><path d="M10.3 220.7H76.39999999999999L82.39999999999999 232.5L76.39999999999999 244.29999999999998H10.3Q7.3 244.29999999999998 7.3 241.29999999999998V223.7Q7.3 220.7 10.3 220.7Z" fill="#e6f8f9" stroke="#2cc4cc" stroke-width="2" stroke-linejoin="round"/><line x1="32.8" y1="220.7" x2="32.8" y2="244.29999999999998" stroke="#2cc4cc" stroke-width="2"/></svg><span class="t" style="left:11.00px;top:225.90px;font-size:12.3px;color:#111;word-spacing:-0.60px;">C 2</span><span class="t" style="left:35.10px;top:225.90px;font-size:12.3px;color:#111;">300 mV</span>
<svg class="abs" style="left:4px;top:335.2px" width="84" height="30" viewBox="4 335.2 84 30"><path d="M10.1 338.0H30.4L41.080000000000005 350.0L30.4 362.0H10.1Q7.1 362.0 7.1 359.0V341.0Q7.1 338.0 10.1 338.0Z" fill="#fde6eb" stroke="#f2607c" stroke-width="1.6" stroke-linejoin="round"/></svg><span class="t" style="left:14.70px;top:343.40px;font-size:12.3px;color:#ea4a6c;word-spacing:-1.00px;">C 3</span>
<svg class="abs" style="left:4px;top:451.8px" width="84" height="30" viewBox="4 451.8 84 30"><path d="M10.3 454.8H76.39999999999999L82.39999999999999 466.6L76.39999999999999 478.40000000000003H10.3Q7.3 478.40000000000003 7.3 475.40000000000003V457.8Q7.3 454.8 10.3 454.8Z" fill="#eef7df" stroke="#86c62a" stroke-width="2" stroke-linejoin="round"/><line x1="32.8" y1="454.8" x2="32.8" y2="478.40000000000003" stroke="#86c62a" stroke-width="2"/></svg><span class="t" style="left:11.00px;top:460.00px;font-size:12.3px;color:#111;word-spacing:-0.60px;">C 4</span><span class="t" style="left:35.10px;top:460.00px;font-size:12.3px;color:#111;">200 mV</span>
<svg class="abs" style="left:4px;top:569.0px" width="84" height="30" viewBox="4 569.0 84 30"><path d="M10.1 571.8H30.4L41.080000000000005 583.8L30.4 595.8000000000001H10.1Q7.1 595.8000000000001 7.1 592.8000000000001V574.8Q7.1 571.8 10.1 571.8Z" fill="#fdeedd" stroke="#f6a24a" stroke-width="1.6" stroke-linejoin="round"/></svg><span class="t" style="left:14.70px;top:577.20px;font-size:12.3px;color:#111;word-spacing:-1.00px;">C 5</span>
<svg class="abs" style="left:4px;top:685.4px" width="84" height="30" viewBox="4 685.4 84 30"><path d="M10.2 688.3H76.53999999999999L82.53999999999999 700.5999999999999L76.53999999999999 712.9H10.2Q7.2 712.9 7.2 709.9V691.3Q7.2 688.3 10.2 688.3Z" fill="#e6e6f6" stroke="#0a0a0a" stroke-width="1.8" stroke-linejoin="round"/><path d="M10.2 688.3H32.8V712.9H10.2Q7.2 712.9 7.2 709.9V691.3Q7.2 688.3 10.2 688.3Z" fill="#2626c0" stroke="#0a0a0a" stroke-width="1.8"/><line x1="32.8" y1="688.3" x2="32.8" y2="712.9" stroke="#0a0a0a" stroke-width="1.8"/></svg><span class="t" style="left:11.00px;top:694.00px;font-size:12.3px;color:#fff;word-spacing:-0.60px;">C 6</span><span class="t" style="left:47.07px;top:694.00px;font-size:12.3px;color:#3434c8;">3 V</span>
<svg class="abs" style="left:4px;top:849.0px" width="84" height="30" viewBox="4 849.0 84 30"><path d="M10.1 851.8H30.4L41.080000000000005 863.8L30.4 875.8000000000001H10.1Q7.1 875.8000000000001 7.1 872.8000000000001V854.8Q7.1 851.8 10.1 851.8Z" fill="#fdebd8" stroke="#f59b3a" stroke-width="1.6" stroke-linejoin="round"/></svg><span class="t" style="left:13.40px;top:857.20px;font-size:12.3px;color:#111;word-spacing:0.74px;">M 1</span>
<svg class="abs" style="left:4px;top:964.2px" width="84" height="30" viewBox="4 964.2 84 30"><path d="M10.1 967.0H30.4L41.080000000000005 979.0L30.4 991.0000000000001H10.1Q7.1 991.0000000000001 7.1 988.0000000000001V970.0Q7.1 967.0 10.1 967.0Z" fill="#efe4f4" stroke="#7b3fa3" stroke-width="1.6" stroke-linejoin="round"/></svg><span class="t" style="left:13.40px;top:972.40px;font-size:12.3px;color:#6a2d92;word-spacing:0.74px;">M 2</span>
<div class="abs" style="left:3px;top:875px;width:40px;height:2px;background:#555"></div>
<span class="t" style="left:102.00px;top:103.20px;font-size:20px;color:#111;letter-spacing:-0.155px;">U_loop,coil</span>
<span class="t" style="left:102.00px;top:220.20px;font-size:20px;color:#1eb8c0;letter-spacing:-0.569px;text-shadow:1px 1px 0 rgba(0,60,70,.55);">U_Bt,coil</span>
<span class="t" style="left:54.50px;top:337.30px;font-size:20px;color:#de2a4c;letter-spacing:-0.761px;text-shadow:1px 1px 0 rgba(60,0,10,.7);">U_Rog,coil</span>
<span class="t" style="left:102.00px;top:454.40px;font-size:20px;color:#7db722;letter-spacing:-0.493px;text-shadow:1px 1px 0 rgba(30,50,0,.6);">U_Photod</span>
<span class="t" style="left:54.50px;top:571.30px;font-size:20px;color:#ea8a20;letter-spacing:-0.575px;text-shadow:1px 1px 0 rgba(70,30,0,.6);">U_Diamagn</span>
<span class="t" style="left:101.00px;top:688.60px;font-size:20px;color:#2222a6;letter-spacing:0.025px;text-shadow:1px 1px 0 rgba(0,0,40,.5);">Trigger</span>
<span class="t" style="left:55.00px;top:839.30px;font-size:26px;color:#ea8a20;letter-spacing:-0.650px;text-shadow:1px 1px 0 rgba(70,30,0,.5);">B_t</span>
<div class="abs" style="left:50px;top:960px;width:60px;height:24px;overflow:hidden"><span class="t" style="left:2.2px;top:3px;font-size:26px;color:#5d2282">I<span style="margin-left:-3px">_</span><span style="margin-left:-4.6px">p</span></span></div>
<span class="t" style="left:1718.44px;top:85.40px;font-size:13.3px;color:#1a1a1a;text-shadow:1px 1px 0 rgba(0,0,0,.85);background:#fff;line-height:13px;margin-top:1px;">30 V</span><span class="t" style="left:1718.44px;top:108.40px;font-size:13.3px;color:#1a1a1a;text-shadow:1px 1px 0 rgba(0,0,0,.85);background:#fff;line-height:13px;margin-top:1px;">20 V</span><span class="t" style="left:1718.44px;top:131.40px;font-size:13.3px;color:#1a1a1a;text-shadow:1px 1px 0 rgba(0,0,0,.85);background:#fff;line-height:13px;margin-top:1px;">10 V</span><span class="t" style="left:1725.85px;top:154.40px;font-size:13.3px;color:#1a1a1a;text-shadow:1px 1px 0 rgba(0,0,0,.85);">0 V</span>
<span class="t" style="left:1707.36px;top:181.90px;font-size:13.3px;color:#21bcc4;text-shadow:1px 1px 0 rgba(0,0,0,.85);background:#fff;line-height:13px;margin-top:1px;">1.25 V</span><span class="t" style="left:1699.95px;top:204.90px;font-size:13.3px;color:#21bcc4;text-shadow:1px 1px 0 rgba(0,0,0,.85);background:#fff;line-height:13px;margin-top:1px;">750 mV</span><span class="t" style="left:1699.95px;top:227.90px;font-size:13.3px;color:#21bcc4;text-shadow:1px 1px 0 rgba(0,0,0,.85);background:#fff;line-height:13px;margin-top:1px;">250 mV</span><span class="t" style="left:1695.53px;top:250.90px;font-size:13.3px;color:#21bcc4;text-shadow:1px 1px 0 rgba(0,0,0,.85);background:#fff;line-height:13px;margin-top:1px;">-250 mV</span><span class="t" style="left:1695.53px;top:273.90px;font-size:13.3px;color:#21bcc4;text-shadow:1px 1px 0 rgba(0,0,0,.85);background:#fff;line-height:13px;margin-top:1px;">-750 mV</span>
<span class="t" style="left:1707.36px;top:295.70px;font-size:13.3px;color:#dc2c4e;text-shadow:1px 1px 0 rgba(0,0,0,.85);background:#fff;line-height:13px;margin-top:1px;">1.80 V</span><span class="t" style="left:1699.95px;top:319.00px;font-size:13.3px;color:#dc2c4e;text-shadow:1px 1px 0 rgba(0,0,0,.85);background:#fff;line-height:13px;margin-top:1px;">900 mV</span><span class="t" style="left:1725.85px;top:341.90px;font-size:13.3px;color:#dc2c4e;text-shadow:1px 1px 0 rgba(0,0,0,.85);">0 V</span><span class="t" style="left:1695.53px;top:364.60px;font-size:13.3px;color:#dc2c4e;text-shadow:1px 1px 0 rgba(0,0,0,.85);background:#fff;line-height:13px;margin-top:1px;">-900 mV</span><span class="t" style="left:1702.91px;top:387.50px;font-size:13.3px;color:#dc2c4e;text-shadow:1px 1px 0 rgba(0,0,0,.85);background:#fff;line-height:13px;margin-top:1px;">-1.80 V</span>
<span class="t" style="left:1725.85px;top:412.80px;font-size:13.3px;color:#7ab51f;text-shadow:1px 1px 0 rgba(0,0,0,.85);background:#fff;line-height:13px;margin-top:1px;">1 V</span><span class="t" style="left:1699.95px;top:436.10px;font-size:13.3px;color:#7ab51f;text-shadow:1px 1px 0 rgba(0,0,0,.85);background:#fff;line-height:13px;margin-top:1px;">600 mV</span><span class="t" style="left:1699.95px;top:459.00px;font-size:13.3px;color:#7ab51f;text-shadow:1px 1px 0 rgba(0,0,0,.85);background:#fff;line-height:13px;margin-top:1px;">200 mV</span><span class="t" style="left:1695.53px;top:481.70px;font-size:13.3px;color:#7ab51f;text-shadow:1px 1px 0 rgba(0,0,0,.85);background:#fff;line-height:13px;margin-top:1px;">-200 mV</span><span class="t" style="left:1695.53px;top:504.60px;font-size:13.3px;color:#7ab51f;text-shadow:1px 1px 0 rgba(0,0,0,.85);background:#fff;line-height:13px;margin-top:1px;">-600 mV</span>
<span class="t" style="left:1725.85px;top:530.10px;font-size:13.3px;color:#ea8a20;text-shadow:1px 1px 0 rgba(0,0,0,.85);background:#fff;line-height:13px;margin-top:1px;">4 V</span><span class="t" style="left:1725.85px;top:552.90px;font-size:13.3px;color:#ea8a20;text-shadow:1px 1px 0 rgba(0,0,0,.85);background:#fff;line-height:13px;margin-top:1px;">2 V</span><span class="t" style="left:1725.85px;top:575.90px;font-size:13.3px;color:#ea8a20;text-shadow:1px 1px 0 rgba(0,0,0,.85);">0 V</span><span class="t" style="left:1721.39px;top:598.90px;font-size:13.3px;color:#ea8a20;text-shadow:1px 1px 0 rgba(0,0,0,.85);background:#fff;line-height:13px;margin-top:1px;">-2 V</span><span class="t" style="left:1721.39px;top:621.90px;font-size:13.3px;color:#ea8a20;text-shadow:1px 1px 0 rgba(0,0,0,.85);background:#fff;line-height:13px;margin-top:1px;">-4 V</span>
<span class="t" style="left:1725.85px;top:646.90px;font-size:13.3px;color:#2222a6;text-shadow:1px 1px 0 rgba(0,0,0,.85);">6 V</span><span class="t" style="left:1707.36px;top:670.10px;font-size:13.3px;color:#2222a6;text-shadow:1px 1px 0 rgba(0,0,0,.85);background:#fff;line-height:13px;margin-top:1px;">4.50 V</span><span class="t" style="left:1725.85px;top:692.90px;font-size:13.3px;color:#2222a6;text-shadow:1px 1px 0 rgba(0,0,0,.85);background:#fff;line-height:13px;margin-top:1px;">3 V</span><span class="t" style="left:1707.36px;top:715.90px;font-size:13.3px;color:#2222a6;text-shadow:1px 1px 0 rgba(0,0,0,.85);background:#fff;line-height:13px;margin-top:1px;">1.50 V</span><span class="t" style="left:1725.85px;top:738.90px;font-size:13.3px;color:#2222a6;text-shadow:1px 1px 0 rgba(0,0,0,.85);background:#fff;line-height:13px;margin-top:1px;">0 V</span>
<svg class="abs" style="left:1728px;top:688px" width="24" height="26" viewBox="1728 688 24 26"><path d="M1730 701L1742.3 690.6V699H1751V703H1742.3V711.2Z" fill="#2525c4"/></svg>
<span class="t" style="left:1674.81px;top:764.10px;font-size:13.3px;color:#d9801c;text-shadow:1px 1px 0 rgba(0,0,0,.85);">580.203 mT</span><span class="t" style="left:1674.81px;top:787.20px;font-size:13.3px;color:#d9801c;text-shadow:1px 1px 0 rgba(0,0,0,.85);background:#fff;line-height:13px;margin-top:1px;">435.152 mT</span><span class="t" style="left:1674.81px;top:810.10px;font-size:13.3px;color:#d9801c;text-shadow:1px 1px 0 rgba(0,0,0,.85);background:#fff;line-height:13px;margin-top:1px;">290.101 mT</span><span class="t" style="left:1674.81px;top:832.90px;font-size:13.3px;color:#d9801c;text-shadow:1px 1px 0 rgba(0,0,0,.85);background:#fff;line-height:13px;margin-top:1px;">145.051 mT</span><span class="t" style="left:1726.81px;top:856.10px;font-size:13.3px;color:#d9801c;text-shadow:1px 1px 0 rgba(0,0,0,.85);background:#fff;line-height:13px;margin-top:1px;">0 T</span>
<span class="t" style="left:1671.09px;top:878.90px;font-size:13.3px;color:#4e1c70;text-shadow:1px 1px 0 rgba(0,0,0,.85);background:#fff;line-height:13px;margin-top:1px;">7.355551 kA</span><span class="t" style="left:1671.09px;top:901.70px;font-size:13.3px;color:#4e1c70;text-shadow:1px 1px 0 rgba(0,0,0,.85);background:#fff;line-height:13px;margin-top:1px;">5.516664 kA</span><span class="t" style="left:1671.09px;top:924.90px;font-size:13.3px;color:#4e1c70;text-shadow:1px 1px 0 rgba(0,0,0,.85);background:#fff;line-height:13px;margin-top:1px;">3.677776 kA</span><span class="t" style="left:1671.09px;top:948.60px;font-size:13.3px;color:#4e1c70;text-shadow:1px 1px 0 rgba(0,0,0,.85);background:#fff;line-height:13px;margin-top:1px;">1.838888 kA</span><span class="t" style="left:1726.55px;top:971.90px;font-size:13.3px;color:#4e1c70;text-shadow:1px 1px 0 rgba(0,0,0,.85);background:#fff;line-height:13px;margin-top:1px;">0 A</span>
<svg class="abs" style="left:1705px;top:60px" width="44" height="44" viewBox="1705 60 44 44"><path d="M1711 64.3H1741.5Q1744.5 64.3 1744.5 67.3V97.5Q1744.5 100 1742.6 98.2L1709.8 66.6Q1708.2 64.3 1711 64.3Z" fill="#4e4e4e" stroke="#0a0a0a" stroke-width="1.3"/>
<circle cx="1737.1" cy="71.6" r="3.9" fill="none" stroke="#9a9a9a" stroke-width="1.5"/>
<line x1="1734.2" y1="74.6" x2="1728.2" y2="80.4" stroke="#9a9a9a" stroke-width="2.6" stroke-linecap="round"/>
</svg>
<span class="t" style="left:47.26px;top:740.40px;font-size:13px;color:#2e2e2e;text-shadow:1px 1px 0 rgba(0,0,0,.8);">0 s</span>
<span class="t" style="left:216.65px;top:740.40px;font-size:13px;color:#2e2e2e;text-shadow:1px 1px 0 rgba(0,0,0,.8);background:#fff;">4 ms</span>
<span class="t" style="left:391.45px;top:740.40px;font-size:13px;color:#2e2e2e;text-shadow:1px 1px 0 rgba(0,0,0,.8);background:#fff;">8 ms</span>
<span class="t" style="left:562.64px;top:740.40px;font-size:13px;color:#2e2e2e;text-shadow:1px 1px 0 rgba(0,0,0,.8);background:#fff;">12 ms</span>
<span class="t" style="left:737.44px;top:740.40px;font-size:13px;color:#2e2e2e;text-shadow:1px 1px 0 rgba(0,0,0,.8);background:#fff;">16 ms</span>
<span class="t" style="left:912.24px;top:740.40px;font-size:13px;color:#2e2e2e;text-shadow:1px 1px 0 rgba(0,0,0,.8);background:#fff;">20 ms</span>
<span class="t" style="left:1087.04px;top:740.40px;font-size:13px;color:#2e2e2e;text-shadow:1px 1px 0 rgba(0,0,0,.8);background:#fff;">24 ms</span>
<span class="t" style="left:1261.84px;top:740.40px;font-size:13px;color:#2e2e2e;text-shadow:1px 1px 0 rgba(0,0,0,.8);background:#fff;">28 ms</span>
<span class="t" style="left:1436.64px;top:740.40px;font-size:13px;color:#2e2e2e;text-shadow:1px 1px 0 rgba(0,0,0,.8);background:#fff;">32 ms</span>
<span class="t" style="left:1611.44px;top:740.40px;font-size:13px;color:#2e2e2e;text-shadow:1px 1px 0 rgba(0,0,0,.8);background:#fff;">36 ms</span>
<div class="abs" style="left:1769px;top:29px;width:160px;height:967px;border:1px solid #635a53;box-sizing:border-box"></div>
<span class="t" style="left:1802.70px;top:29.60px;font-size:15px;color:#efefef;font-weight:700;letter-spacing:0.842px;">Add New...</span>
<div class="btn" style="left:1778px;top:54px;width:63px;height:37px"></div>
<div class="btn" style="left:1850px;top:54px;width:63px;height:37px"></div>
<div class="btn" style="left:1778px;top:100px;width:63px;height:37px"></div>
<div class="btn" style="left:1850px;top:100px;width:63px;height:37px"></div>
<div class="btn" style="left:1778px;top:146px;width:63px;height:37px"></div>
<div class="btn" style="left:1850px;top:146px;width:63px;height:37px"></div>
<div class="btn" style="left:1778px;top:196px;width:63px;height:37px"></div>
<div class="btn" style="left:1850px;top:196px;width:63px;height:37px"></div>
<span class="t" style="left:1784.70px;top:62.50px;font-size:15px;color:#f4f4f4;letter-spacing:-0.333px;">Cursors</span>
<span class="t" style="left:1856.30px;top:62.50px;font-size:15px;color:#f4f4f4;letter-spacing:0.502px;">Callout</span>
<span class="t" style="left:1779.90px;top:108.80px;font-size:15px;color:#f4f4f4;letter-spacing:0.108px;">Measure</span>
<span class="t" style="left:1858.50px;top:108.80px;font-size:15px;color:#f4f4f4;letter-spacing:-0.422px;">Search</span>
<span class="t" style="left:1785.30px;top:146.30px;font-size:15px;color:#f4f4f4;letter-spacing:-0.354px;">Results</span>
<span class="t" style="left:1791.50px;top:162.00px;font-size:15px;color:#f4f4f4;letter-spacing:0.013px;">Table</span>
<span class="t" style="left:1867.20px;top:154.80px;font-size:15px;color:#f4f4f4;letter-spacing:0.788px;">Plot</span>
<span class="t" style="left:1856.30px;top:205.00px;font-size:15px;color:#f4f4f4;letter-spacing:0.602px;">More...</span>
<div class="seph" style="left:1773px;top:189px;width:144px"></div><div class="seph" style="left:1773px;top:241px;width:144px"></div>
<svg class="abs" style="left:1794px;top:199px" width="34" height="30" viewBox="1794 199 34 30">
<rect x="1798.3" y="203.4" width="21" height="18.6" fill="none" stroke="#b4b4b4" stroke-width="1.7" stroke-dasharray="3.2 2.2"/>
<circle cx="1811.3" cy="210.6" r="4.3" fill="none" stroke="#b4b4b4" stroke-width="1.6"/>
<line x1="1808" y1="213.8" x2="1803.2" y2="217.6" stroke="#b4b4b4" stroke-width="2.4" stroke-linecap="round"/>
<path d="M1815.2 217.2L1823.2 222.3L1819.8 222.9L1821.6 226.3L1820 227L1818.3 223.6L1815.9 225.8Z" fill="#b4b4b4"/>
</svg>
<svg class="abs" style="left:1757px;top:498px" width="8" height="30" viewBox="0 0 8 30"><circle cx="4" cy="5.5" r="1.8" fill="#c8c8c8"/><circle cx="4" cy="14.5" r="1.8" fill="#c8c8c8"/><circle cx="4" cy="23.5" r="1.8" fill="#c8c8c8"/></svg>
<div class="badge" style="left:3px;top:984px;height:94px"><div class="hd" style="background:#1f1f1f"></div><div class="abs" style="left:0;top:19px;width:100%;height:2px;background:#a8a8a8"></div><div class="clip"></div><svg class="abs" style="left:0;top:21px" width="18" height="17" viewBox="0 0 18 17"><path d="M8 1.6L15.2 15.6H0.8Z" fill="#f7ee1a" stroke="#4b3a8c" stroke-width="0.9" stroke-linejoin="round"/><path d="M8 5.6V11.6M8 13V14.4" stroke="#8a8a50" stroke-width="1.2"/></svg></div>
<span class="t" style="left:8.90px;top:984.40px;font-size:14.5px;color:#f4e63c;letter-spacing:-0.077px;-webkit-text-stroke:0.35px #f4e63c;">Ch 1</span>
<span class="t" style="left:19.80px;top:1004.20px;font-size:14.5px;color:#fff;letter-spacing:0.631px;-webkit-text-stroke:0.3px #fff;">Clipping</span>
<span class="t" style="left:8.90px;top:1023.50px;font-size:14px;color:#111;letter-spacing:-0.108px;">5 V/div</span>
<span class="t" style="left:9.40px;top:1042.70px;font-size:14px;color:#111;">1 MΩ</span>
<span class="t" style="left:8.90px;top:1061.00px;font-size:14px;color:#111;">200 kHz</span>
<span class="t" style="left:74.4px;top:1060.4px;font-size:9.5px;color:#111;font-weight:700">B<span style="position:relative;top:2.6px;font-size:9px;margin-left:-0.4px">w</span></span>
<div class="badge" style="left:98px;top:984px;height:94px"><div class="hd" style="background:#1f4044"></div><div class="abs" style="left:0;top:19px;width:100%;height:2px;background:#a8a8a8"></div><div class="clip"></div><svg class="abs" style="left:0;top:21px" width="18" height="17" viewBox="0 0 18 17"><path d="M8 1.6L15.2 15.6H0.8Z" fill="#f7ee1a" stroke="#4b3a8c" stroke-width="0.9" stroke-linejoin="round"/><path d="M8 5.6V11.6M8 13V14.4" stroke="#8a8a50" stroke-width="1.2"/></svg></div>
<span class="t" style="left:103.90px;top:984.40px;font-size:14.5px;color:#2fd0d8;letter-spacing:-0.077px;-webkit-text-stroke:0.35px #2fd0d8;">Ch 2</span>
<span class="t" style="left:114.80px;top:1004.20px;font-size:14.5px;color:#fff;letter-spacing:0.631px;-webkit-text-stroke:0.3px #fff;">Clipping</span>
<span class="t" style="left:103.90px;top:1023.50px;font-size:14px;color:#111;letter-spacing:0.234px;">250 mV/div</span>
<span class="t" style="left:104.40px;top:1042.70px;font-size:14px;color:#111;">1 MΩ</span>
<span class="t" style="left:103.90px;top:1061.00px;font-size:14px;color:#111;">200 kHz</span>
<span class="t" style="left:169.4px;top:1060.4px;font-size:9.5px;color:#111;font-weight:700">B<span style="position:relative;top:2.6px;font-size:9px;margin-left:-0.4px">w</span></span>
<div class="badge" style="left:193px;top:984px;height:94px"><div class="hd" style="background:#46262b"></div><div class="abs" style="left:0;top:19px;width:100%;height:2px;background:#a8a8a8"></div><div class="clip"></div><svg class="abs" style="left:0;top:21px" width="18" height="17" viewBox="0 0 18 17"><path d="M8 1.6L15.2 15.6H0.8Z" fill="#f7ee1a" stroke="#4b3a8c" stroke-width="0.9" stroke-linejoin="round"/><path d="M8 5.6V11.6M8 13V14.4" stroke="#8a8a50" stroke-width="1.2"/></svg></div>
<span class="t" style="left:198.90px;top:984.40px;font-size:14.5px;color:#ffffff;letter-spacing:-0.077px;-webkit-text-stroke:0.35px #ffffff;">Ch 3</span>
<span class="t" style="left:209.80px;top:1004.20px;font-size:14.5px;color:#fff;letter-spacing:0.631px;-webkit-text-stroke:0.3px #fff;">Clipping</span>
<span class="t" style="left:198.90px;top:1023.50px;font-size:14px;color:#111;letter-spacing:0.234px;">450 mV/div</span>
<span class="t" style="left:199.40px;top:1042.70px;font-size:14px;color:#111;">1 MΩ</span>
<span class="t" style="left:198.90px;top:1061.00px;font-size:14px;color:#111;">200 kHz</span>
<span class="t" style="left:264.4px;top:1060.4px;font-size:9.5px;color:#111;font-weight:700">B<span style="position:relative;top:2.6px;font-size:9px;margin-left:-0.4px">w</span></span>
<div class="badge" style="left:288px;top:1003px;height:75px"><div class="hd" style="background:#3a4226;height:18.5px"></div><div class="abs" style="left:0;top:18.5px;width:100%;height:1.5px;background:#a8a8a8"></div></div>
<span class="t" style="left:293.30px;top:1003.70px;font-size:14.5px;color:#8fd630;letter-spacing:-0.077px;-webkit-text-stroke:0.35px #8fd630;">Ch 4</span>
<span class="t" style="left:293.90px;top:1023.50px;font-size:14px;color:#111;letter-spacing:0.234px;">200 mV/div</span>
<span class="t" style="left:294.40px;top:1042.70px;font-size:14px;color:#111;">1 MΩ</span>
<span class="t" style="left:293.90px;top:1061.00px;font-size:14px;color:#111;">200 kHz</span>
<span class="t" style="left:359.4px;top:1060.4px;font-size:9.5px;color:#111;font-weight:700">B<span style="position:relative;top:2.6px;font-size:9px;margin-left:-0.4px">w</span></span>
<div class="badge" style="left:383px;top:1003px;height:75px"><div class="hd" style="background:#4a3422;height:18.5px"></div><div class="abs" style="left:0;top:18.5px;width:100%;height:1.5px;background:#a8a8a8"></div></div>
<span class="t" style="left:388.30px;top:1003.70px;font-size:14.5px;color:#f7a040;letter-spacing:-0.077px;-webkit-text-stroke:0.35px #f7a040;">Ch 5</span>
<span class="t" style="left:388.90px;top:1023.50px;font-size:14px;color:#111;letter-spacing:-0.108px;">1 V/div</span>
<span class="t" style="left:389.40px;top:1042.70px;font-size:14px;color:#111;">1 MΩ</span>
<span class="t" style="left:388.90px;top:1061.00px;font-size:14px;color:#111;">200 kHz</span>
<span class="t" style="left:454.4px;top:1060.4px;font-size:9.5px;color:#111;font-weight:700">B<span style="position:relative;top:2.6px;font-size:9px;margin-left:-0.4px">w</span></span>
<div class="badge" style="left:478px;top:984px;height:94px"><div class="hd" style="background:#2626c0"></div><div class="abs" style="left:0;top:19px;width:100%;height:2px;background:#a8a8a8"></div><div class="clip"></div><svg class="abs" style="left:0;top:21px" width="18" height="17" viewBox="0 0 18 17"><path d="M8 1.6L15.2 15.6H0.8Z" fill="#f7ee1a" stroke="#4b3a8c" stroke-width="0.9" stroke-linejoin="round"/><path d="M8 5.6V11.6M8 13V14.4" stroke="#8a8a50" stroke-width="1.2"/></svg></div>
<span class="t" style="left:483.90px;top:984.40px;font-size:14.5px;color:#ffffff;letter-spacing:-0.077px;-webkit-text-stroke:0.35px #ffffff;">Ch 6</span>
<span class="t" style="left:494.80px;top:1004.20px;font-size:14.5px;color:#fff;letter-spacing:0.631px;-webkit-text-stroke:0.3px #fff;">Clipping</span>
<span class="t" style="left:483.90px;top:1023.50px;font-size:14px;color:#111;letter-spacing:0.234px;">750 mV/div</span>
<span class="t" style="left:484.40px;top:1042.70px;font-size:14px;color:#111;">1 MΩ</span>
<span class="t" style="left:483.90px;top:1061.00px;font-size:14px;color:#111;">200 kHz</span>
<span class="t" style="left:549.4px;top:1060.4px;font-size:9.5px;color:#111;font-weight:700">B<span style="position:relative;top:2.6px;font-size:9px;margin-left:-0.4px">w</span></span>
<div class="badge" style="left:573px;top:1003px;height:75px"><div class="hd" style="background:#473322;height:18.5px"></div><div class="abs" style="left:0;top:18.5px;width:100%;height:1.5px;background:#a8a8a8"></div></div>
<span class="t" style="left:578.80px;top:1003.30px;font-size:14.5px;color:#f7a040;font-weight:700;letter-spacing:0.314px;">Math 1</span>
<span class="t" style="left:578.50px;top:1023.30px;font-size:14px;color:#111;font-weight:700;letter-spacing:0.523px;">72.5 mT/div</span>
<span class="t" style="left:578.50px;top:1042.00px;font-size:14px;color:#111;letter-spacing:0.051px;">Intg(Ch2)…</span>
<div class="badge" style="left:668px;top:1003px;height:75px"><div class="hd" style="background:#2c2233;height:18.5px"></div><div class="abs" style="left:0;top:18.5px;width:100%;height:1.5px;background:#a8a8a8"></div></div>
<span class="t" style="left:673.80px;top:1003.30px;font-size:14.5px;color:#ffffff;font-weight:700;letter-spacing:0.314px;">Math 2</span>
<span class="t" style="left:673.50px;top:1023.30px;font-size:14px;color:#111;font-weight:700;letter-spacing:0.478px;">919.44 A/…</span>
<span class="t" style="left:673.50px;top:1042.00px;font-size:14px;color:#111;letter-spacing:0.017px;">-Intg(Ch3…</span>
<div class="sepv" style="left:1118px;top:1000px;height:78px"></div><div class="sepv" style="left:1269px;top:1000px;height:78px"></div>
<div class="btn" style="left:1129px;top:999px;width:40px;height:80px;border-radius:8px"><div class="abs" style="left:3.5px;top:7.5px;width:32px;height:2.6px;background:#b5222b"></div></div>
<span class="t" style="left:1135.65px;top:1018.70px;font-size:15px;color:#f4f4f4;">Add</span><span class="t" style="left:1133.98px;top:1034.90px;font-size:15px;color:#f4f4f4;">New</span><span class="t" style="left:1132.33px;top:1050.70px;font-size:15px;color:#f4f4f4;">Math</span>
<div class="btn" style="left:1174px;top:999px;width:40px;height:80px;border-radius:8px"><div class="abs" style="left:3.5px;top:7.5px;width:32px;height:2.6px;background:#c9c9e2"></div></div>
<span class="t" style="left:1180.65px;top:1018.70px;font-size:15px;color:#f4f4f4;">Add</span><span class="t" style="left:1178.98px;top:1034.90px;font-size:15px;color:#f4f4f4;">New</span><span class="t" style="left:1182.32px;top:1050.70px;font-size:15px;color:#f4f4f4;">Ref</span>
<div class="btn" style="left:1219px;top:999px;width:40px;height:80px;border-radius:8px"><div class="abs" style="left:3.5px;top:7.5px;width:32px;height:2.6px;background:#c864f2"></div></div>
<span class="t" style="left:1225.65px;top:1018.70px;font-size:15px;color:#f4f4f4;">Add</span><span class="t" style="left:1223.98px;top:1034.90px;font-size:15px;color:#f4f4f4;">New</span><span class="t" style="left:1226.08px;top:1050.70px;font-size:15px;color:#f4f4f4;">Bus</span>
<div class="info" style="left:1280.5px;top:1003px;width:199px;height:75.5px"><div class="hd"></div></div>
<span class="t" style="left:1286.60px;top:1003.50px;font-size:15px;color:#fff;letter-spacing:0.585px;">Horizontal</span>
<span class="t" style="left:1285.50px;top:1023.40px;font-size:14px;color:#111;letter-spacing:0.084px;">4 ms/div</span><span class="t" style="left:1391.20px;top:1023.40px;font-size:14px;color:#111;letter-spacing:0.046px;">40 ms</span>
<span class="t" style="left:1285.50px;top:1042.50px;font-size:14px;color:#111;letter-spacing:-0.423px;">SR: 1 MS/s</span><span class="t" style="left:1392.30px;top:1042.50px;font-size:14px;color:#111;letter-spacing:0.064px;">1 µs/pt</span>
<span class="t" style="left:1285.50px;top:1061.20px;font-size:14px;color:#111;letter-spacing:-0.101px;">RL: 40 kpts</span><span class="t" style="left:1405.80px;top:1061.20px;font-size:14px;color:#111;letter-spacing:0.470px;">3%</span>
<svg class="abs" style="left:1389px;top:1061px" width="14" height="16" viewBox="1389 1061 14 16"><path d="M1391.6 1063.3H1399.6V1071.6H1397.6L1395.6 1074.8L1393.6 1071.6H1391.6Z" fill="#000" stroke="#f7901e" stroke-width="1.1"/><path d="M1393.6 1065.4H1397.6M1395.6 1065.4V1070" stroke="#fff" stroke-width="1.3" fill="none"/></svg>
<div class="info" style="left:1485.5px;top:1003px;width:159px;height:75.5px"><div class="hd"></div></div>
<span class="t" style="left:1490.90px;top:1003.50px;font-size:15px;color:#fff;letter-spacing:0.392px;">Trigger</span>
<div class="abs" style="left:1490px;top:1025px;width:30px;height:15.5px;box-sizing:border-box;border:1px solid #0a0a0a;border-radius:5.5px;background:#2727c6"></div>
<span class="t" style="left:1500.84px;top:1024.00px;font-size:15px;color:#fff;">6</span>
<svg class="abs" style="left:1528px;top:1024px" width="22" height="16" viewBox="1528 1024 22 16"><path d="M1530 1037H1534.5L1542 1027.4H1546" fill="none" stroke="#38389a" stroke-width="1.1"/></svg>
<span class="t" style="left:1556.20px;top:1023.40px;font-size:14px;color:#111;letter-spacing:0.100px;">3 V</span>
<div class="info" style="left:1650.5px;top:1003px;width:149px;height:75.5px"><div class="hd"></div></div>
<span class="t" style="left:1656.00px;top:1003.70px;font-size:15px;color:#fff;letter-spacing:0.477px;">Acquisition</span>
<span class="t" style="left:1655.30px;top:1023.70px;font-size:14px;color:#111;letter-spacing:0.283px;">Manual,</span><span class="t" style="left:1736.30px;top:1023.70px;font-size:14px;color:#111;letter-spacing:-0.101px;">Analyze</span>
<span class="t" style="left:1655.30px;top:1042.30px;font-size:14px;color:#111;letter-spacing:0.018px;">High Res: 16 bits</span>
<span class="t" style="left:1655.30px;top:1061.30px;font-size:14px;color:#111;">Single: 1 /1</span>
<div class="sepv" style="left:1811px;top:1000px;height:78px"></div>
<div class="abs" style="left:1822px;top:999.5px;width:90px;height:35px;border-radius:6px;background:#fe1b24;box-sizing:border-box;border:1px solid #7a2a2a"></div>
<span class="t" style="left:1839.00px;top:1006.90px;font-size:14px;color:#fff;font-weight:700;letter-spacing:-0.083px;">Stopped</span>
<div class="abs" style="left:1822px;top:1040.5px;width:90px;height:38px;border-radius:6px;background:#c9c9c9"></div>
<span class="t" style="left:1826.70px;top:1040.20px;font-size:15px;color:#111;letter-spacing:-0.042px;">30 Apr 2025</span><span class="t" style="left:1825.20px;top:1057.40px;font-size:15px;color:#111;letter-spacing:0.070px;">11:59:35 AM</span>
</body></html>
